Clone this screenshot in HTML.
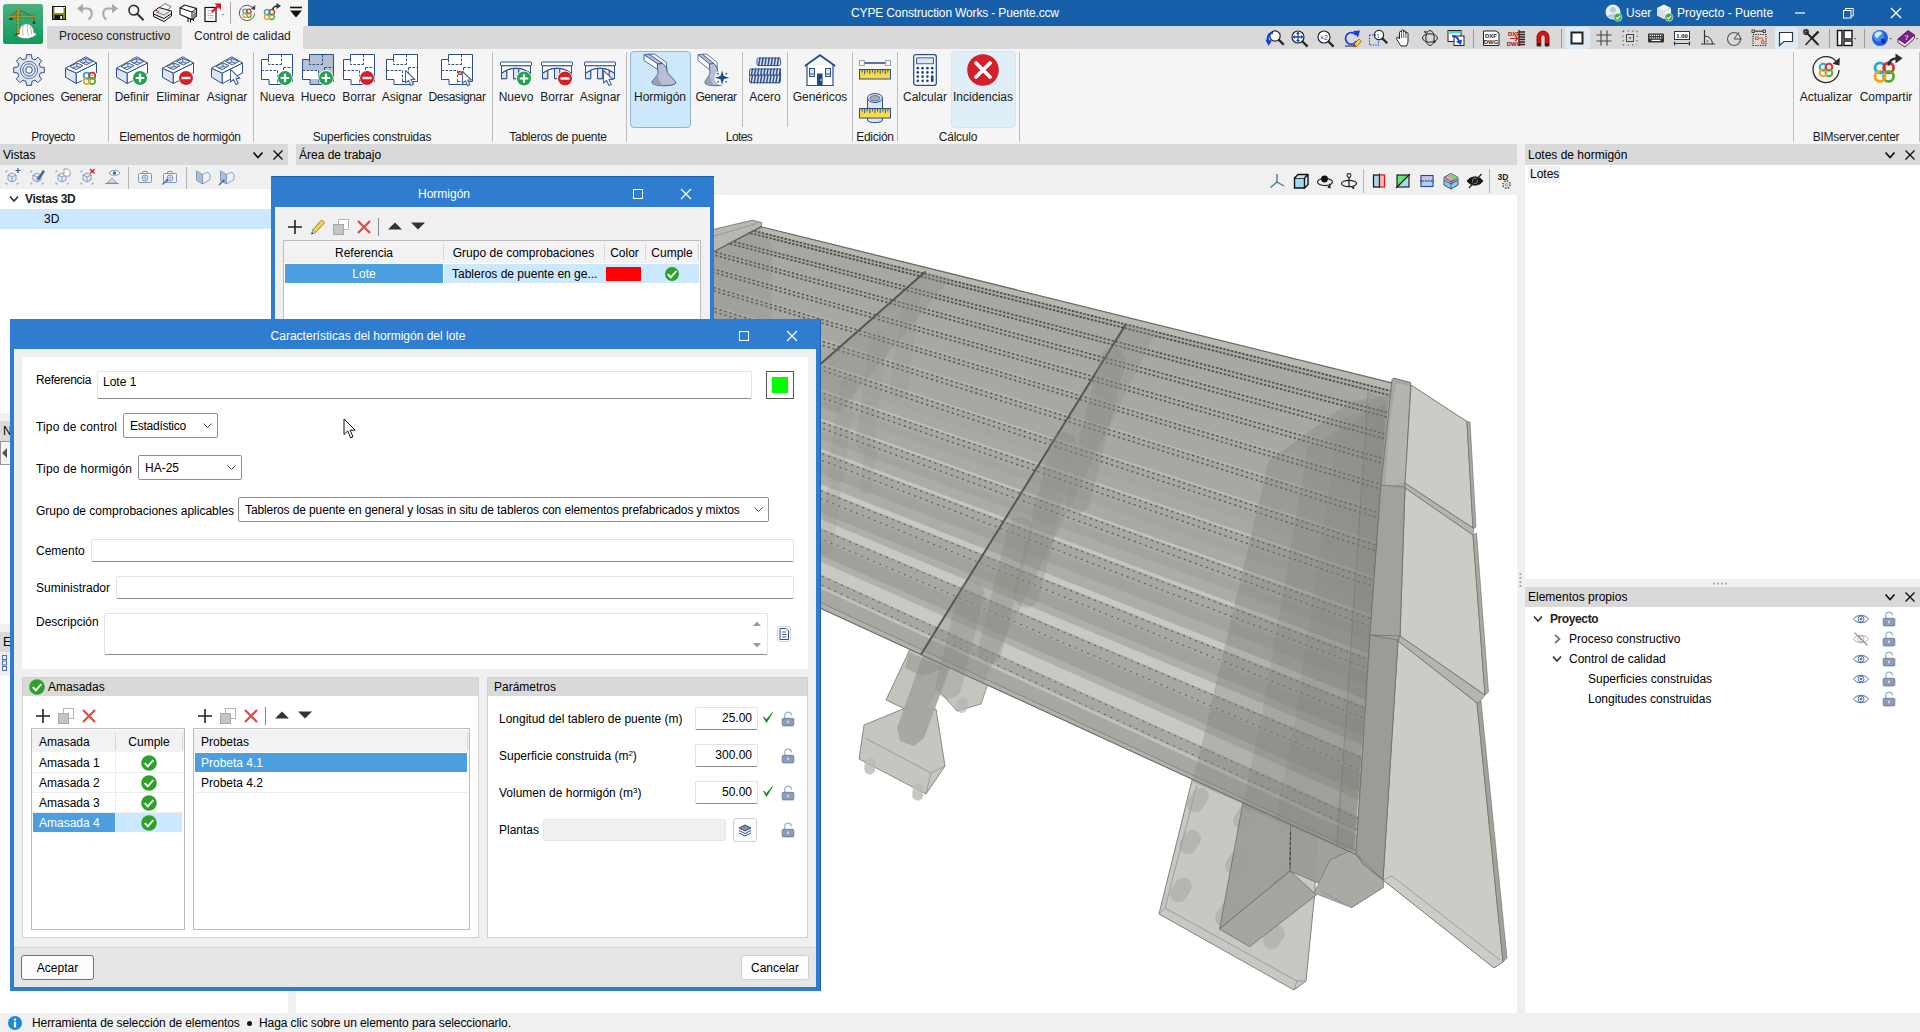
<!DOCTYPE html>
<html lang="es"><head><meta charset="utf-8"><title>CYPE Construction Works - Puente.ccw</title>
<style>
*{box-sizing:border-box;margin:0;padding:0}
html,body{width:1920px;height:1032px;overflow:hidden;background:#fff}
body{font-family:"Liberation Sans",sans-serif;font-size:12px;color:#000;position:relative;line-height:14px}
.a{position:absolute}
.t{position:absolute;white-space:nowrap;line-height:14px;height:14px}
.c{text-align:center}
.w{color:#fff}
.g9{background:#d9d9d9}
.f0{background:#f0f0f0}
.f5{background:#f5f5f5}
.inp{position:absolute;background:#fff;border:1px solid #e3e3e3;border-bottom:1px solid #8a8a8a;border-radius:2px}
.sel{position:absolute;background:#fff;border:1px solid #8e8e8e;border-radius:2px}
.sel .t{left:6px}
.chev{position:absolute;right:5px;top:9px;width:9px;height:6px}
.btn{position:absolute;background:#fdfdfd;border:1px solid #d0d0d0;border-radius:3px;text-align:center;line-height:24px}
.vsep{position:absolute;width:1px;background:#bdbdbd}
.rl{position:absolute;top:90px;height:14px;line-height:14px;white-space:nowrap;text-align:center;color:#1a1a1a}
.gl{position:absolute;top:130px;letter-spacing:-0.25px;height:14px;line-height:14px;white-space:nowrap;text-align:center;color:#1a1a1a}
svg{position:absolute;overflow:visible}
</style></head><body>
<!-- title bar -->
<div class="a f5" style="left:0;top:0;width:1920px;height:144px"></div>
<div class="a" style="left:308px;top:0;width:1612px;height:26px;background:#185faa"></div>
<div class="t w c" style="left:755px;top:6px;width:400px;letter-spacing:-0.15px">CYPE Construction Works - Puente.ccw</div>
<div class="t w" style="left:1626px;top:6px">User</div>
<div class="t w" style="left:1677px;top:6px">Proyecto - Puente</div>
<!-- tab row -->
<div class="a g9" style="left:47px;top:26px;width:1873px;height:23px"></div>
<div class="a f5" style="left:182px;top:26px;width:121px;height:23px"></div>
<div class="t" style="left:59px;top:29px;color:#222">Proceso constructivo</div>
<div class="t" style="left:194px;top:29px;color:#222">Control de calidad</div>
<!-- ribbon selected buttons -->
<div class="a" style="left:630px;top:51px;width:61px;height:77px;background:#cde8f8;border:1px solid #8fb6d2;border-radius:4px"></div>
<div class="a" style="left:951px;top:51px;width:65px;height:77px;background:#dfeef7;border:1px solid #d2e6f2;border-radius:4px"></div>
<!-- ribbon labels -->
<div class="rl" style="left:-11px;width:80px;top:90px">Opciones</div>
<div class="rl" style="left:41px;width:80px;letter-spacing:-0.4px">Generar</div>
<div class="rl" style="left:92px;width:80px">Definir</div>
<div class="rl" style="left:138px;width:80px">Eliminar</div>
<div class="rl" style="left:187px;width:80px">Asignar</div>
<div class="rl" style="left:237px;width:80px">Nueva</div>
<div class="rl" style="left:278px;width:80px">Hueco</div>
<div class="rl" style="left:319px;width:80px">Borrar</div>
<div class="rl" style="left:362px;width:80px">Asignar</div>
<div class="rl" style="left:417px;width:80px;letter-spacing:-0.35px">Desasignar</div>
<div class="rl" style="left:476px;width:80px">Nuevo</div>
<div class="rl" style="left:517px;width:80px">Borrar</div>
<div class="rl" style="left:560px;width:80px">Asignar</div>
<div class="rl" style="left:620px;width:80px">Hormigón</div>
<div class="rl" style="left:676px;width:80px;letter-spacing:-0.4px">Generar</div>
<div class="rl" style="left:725px;width:80px">Acero</div>
<div class="rl" style="left:780px;width:80px">Genéricos</div>
<div class="rl" style="left:885px;width:80px">Calcular</div>
<div class="rl" style="left:943px;width:80px">Incidencias</div>
<div class="rl" style="left:1786px;width:80px">Actualizar</div>
<div class="rl" style="left:1846px;width:80px">Compartir</div>
<!-- group labels -->
<div class="gl" style="left:3px;width:100px;letter-spacing:-0.5px">Proyecto</div>
<div class="gl" style="left:100px;width:160px">Elementos de hormigón</div>
<div class="gl" style="left:292px;width:160px">Superficies construidas</div>
<div class="gl" style="left:478px;width:160px">Tableros de puente</div>
<div class="gl" style="left:689px;width:100px;letter-spacing:-0.6px">Lotes</div>
<div class="gl" style="left:825px;width:100px">Edición</div>
<div class="gl" style="left:908px;width:100px">Cálculo</div>
<div class="gl" style="left:1796px;width:120px">BIMserver.center</div>
<!-- ribbon separators -->
<div class="vsep" style="left:108px;top:52px;height:90px"></div>
<div class="vsep" style="left:253px;top:52px;height:90px"></div>
<div class="vsep" style="left:492px;top:52px;height:90px"></div>
<div class="vsep" style="left:626px;top:52px;height:90px"></div>
<div class="vsep" style="left:742px;top:52px;height:75px"></div>
<div class="vsep" style="left:787px;top:52px;height:75px"></div>
<div class="vsep" style="left:852px;top:52px;height:90px"></div>
<div class="vsep" style="left:897px;top:52px;height:90px"></div>
<div class="vsep" style="left:1019px;top:52px;height:90px"></div>
<div class="vsep" style="left:1793px;top:52px;height:90px"></div>
<div class="vsep" style="left:1919px;top:52px;height:90px"></div>
<!-- panel headers row -->
<div class="a f0" style="left:0;top:144px;width:1920px;height:888px"></div>
<div class="a g9" style="left:0;top:144px;width:288px;height:21px"></div>
<div class="a g9" style="left:296px;top:144px;width:1221px;height:21px"></div>
<div class="a g9" style="left:1525px;top:144px;width:395px;height:21px"></div>
<div class="t" style="left:3px;top:148px">Vistas</div>
<div class="t" style="left:299px;top:148px">Área de trabajo</div>
<div class="t" style="left:1528px;top:148px">Lotes de hormigón</div>
<!-- left panel -->
<div class="a" style="left:0;top:189px;width:288px;height:824px;background:#fff"></div>
<div class="a" style="left:0;top:209px;width:288px;height:20px;background:#cce8ff"></div>
<div class="t" style="left:25px;top:192px;font-weight:bold;color:#222;letter-spacing:-0.4px">Vistas 3D</div>
<div class="t" style="left:44px;top:212px">3D</div>
<!-- left hidden-panel bits -->
<div class="a f0" style="left:0;top:413px;width:10px;height:8px"></div>
<div class="a g9" style="left:0;top:421px;width:10px;height:20px"></div>
<div class="t" style="left:3px;top:424px">N</div>
<div class="a" style="left:0;top:441px;width:12px;height:24px;background:#f5f5f5;border:1px solid #9a9a9a"></div>
<div class="a f0" style="left:0;top:624px;width:10px;height:8px"></div>
<div class="a g9" style="left:0;top:632px;width:10px;height:20px"></div>
<div class="t" style="left:3px;top:635px">E</div>
<div class="a f0" style="left:0;top:652px;width:10px;height:24px"></div>
<!-- work area -->
<div class="a" style="left:296px;top:195px;width:1221px;height:818px;background:#fff"></div>
<!-- right panels -->
<div class="a" style="left:1525px;top:165px;width:395px;height:414px;background:#fff"></div>
<div class="a f0" style="left:1528px;top:166px;width:32px;height:17px"></div>
<div class="t" style="left:1530px;top:167px">Lotes</div>
<div class="a g9" style="left:1525px;top:587px;width:395px;height:20px"></div>
<div class="t" style="left:1528px;top:590px">Elementos propios</div>
<div class="a" style="left:1525px;top:607px;width:395px;height:425px;background:#fff"></div>
<div class="t" style="left:1550px;top:612px;font-weight:bold;color:#222;letter-spacing:-0.4px">Proyecto</div>
<div class="t" style="left:1569px;top:632px">Proceso constructivo</div>
<div class="t" style="left:1569px;top:652px">Control de calidad</div>
<div class="t" style="left:1588px;top:672px">Superficies construidas</div>
<div class="t" style="left:1588px;top:692px">Longitudes construidas</div>
<!-- status bar -->
<div class="a f0" style="left:0;top:1013px;width:1920px;height:19px"></div>
<div class="t" style="left:32px;top:1016px;letter-spacing:-0.1px">Herramienta de selección de elementos</div>
<div class="a" style="left:247px;top:1021px;width:5px;height:5px;border-radius:3px;background:#111"></div>
<div class="t" style="left:259px;top:1016px;letter-spacing:-0.09px">Haga clic sobre un elemento para seleccionarlo.</div>
<!-- ribbon icons -->
<svg style="left:13px;top:54px" width="32" height="32" viewBox="0 0 32 32"><path d="M13.1 4.6L13.4 0.7L18.6 0.7L18.9 4.6L22.0 5.9L24.9 3.3L28.7 7.1L26.1 10.0L27.4 13.1L31.3 13.4L31.3 18.6L27.4 18.9L26.1 22.0L28.7 24.9L24.9 28.7L22.0 26.1L18.9 27.4L18.6 31.3L13.4 31.3L13.1 27.4L10.0 26.1L7.1 28.7L3.3 24.9L5.9 22.0L4.6 18.9L0.7 18.6L0.7 13.4L4.6 13.1L5.9 10.0L3.3 7.1L7.1 3.3L10.0 5.9Z" fill="#dfe4ef" stroke="#2b4f8c" stroke-width="1" stroke-linejoin="round"/><circle cx="16" cy="16" r="8.6" fill="#eef1f7" stroke="#2b4f8c" stroke-width="0.8"/><circle cx="16" cy="16" r="6.2" fill="#dfe4ef" stroke="#2b4f8c" stroke-width="0.9"/><circle cx="16" cy="16" r="3.3" fill="#fff" stroke="#2b4f8c" stroke-width="1"/></svg>
<svg style="left:65px;top:54px" width="32" height="32" viewBox="0 0 32 32"><polygon points="0.5,14.3 11.3,19 11.3,29.5 0.5,23.2" fill="#dfe4ef" stroke="#2b4f8c" stroke-width="1" stroke-linejoin="round"/><polygon points="11.3,19 31.5,9 31.5,19 11.3,29.5" fill="#fff" stroke="#2b4f8c" stroke-width="1" stroke-linejoin="round"/><polygon points="0.5,14.3 20.8,2.8 31.5,9 11.3,19" fill="#fff" stroke="#2b4f8c" stroke-width="1" stroke-linejoin="round"/><polygon points="4.9,12.5 11.9,8.9 18,11.6 11.2,15.7" fill="#dfe4ef" stroke="#2b4f8c" stroke-width="0.9" stroke-linejoin="round"/><polygon points="14.6,7.5 20.7,4.4 27.8,7.5 21.4,10.9" fill="#dfe4ef" stroke="#2b4f8c" stroke-width="0.9" stroke-linejoin="round"/><path d="M11.9 8.9V12.6L7.6 14.2M11.9 12.6L15.6 13.2M20.7 4.4V8L17.2 9.2M20.7 8L24.6 9.2" fill="none" stroke="#2b4f8c" stroke-width="0.8"/><circle cx="24" cy="24" r="8" fill="#f5f5f5" opacity="0.0"/><circle cx="21.73" cy="21.63" r="3.10" fill="none" stroke="#fff" stroke-width="3.54"/><circle cx="27.07" cy="21.63" r="3.10" fill="none" stroke="#fff" stroke-width="3.54"/><circle cx="27.07" cy="26.97" r="3.10" fill="none" stroke="#fff" stroke-width="3.54"/><circle cx="21.73" cy="26.97" r="3.10" fill="none" stroke="#fff" stroke-width="3.54"/><circle cx="21.73" cy="21.63" r="3.10" fill="none" stroke="#29a5dc" stroke-width="1.74"/><circle cx="27.07" cy="21.63" r="3.10" fill="none" stroke="#db2f2c" stroke-width="1.74"/><circle cx="27.07" cy="26.97" r="3.10" fill="none" stroke="#52ae32" stroke-width="1.74"/><circle cx="21.73" cy="26.97" r="3.10" fill="none" stroke="#f1a31f" stroke-width="1.74"/><path d="M21.73 24.73A3.10 3.10 0 0 0 24.21 23.49" fill="none" stroke="#29a5dc" stroke-width="1.74"/></svg>
<svg style="left:116px;top:54px" width="32" height="32" viewBox="0 0 32 32"><polygon points="0.5,14.3 11.3,19 11.3,29.5 0.5,23.2" fill="#dfe4ef" stroke="#2b4f8c" stroke-width="1" stroke-linejoin="round"/><polygon points="11.3,19 31.5,9 31.5,19 11.3,29.5" fill="#fff" stroke="#2b4f8c" stroke-width="1" stroke-linejoin="round"/><polygon points="0.5,14.3 20.8,2.8 31.5,9 11.3,19" fill="#fff" stroke="#2b4f8c" stroke-width="1" stroke-linejoin="round"/><polygon points="4.9,12.5 11.9,8.9 18,11.6 11.2,15.7" fill="#dfe4ef" stroke="#2b4f8c" stroke-width="0.9" stroke-linejoin="round"/><polygon points="14.6,7.5 20.7,4.4 27.8,7.5 21.4,10.9" fill="#dfe4ef" stroke="#2b4f8c" stroke-width="0.9" stroke-linejoin="round"/><path d="M11.9 8.9V12.6L7.6 14.2M11.9 12.6L15.6 13.2M20.7 4.4V8L17.2 9.2M20.7 8L24.6 9.2" fill="none" stroke="#2b4f8c" stroke-width="0.8"/><circle cx="24" cy="24" r="7.8" fill="#fff"/><circle cx="24" cy="24" r="7" fill="#22a150"/><path d="M19.7 24H28.3M24 19.7V28.3" stroke="#fff" stroke-width="2.2"/></svg>
<svg style="left:162px;top:54px" width="32" height="32" viewBox="0 0 32 32"><polygon points="0.5,14.3 11.3,19 11.3,29.5 0.5,23.2" fill="#dfe4ef" stroke="#2b4f8c" stroke-width="1" stroke-linejoin="round"/><polygon points="11.3,19 31.5,9 31.5,19 11.3,29.5" fill="#fff" stroke="#2b4f8c" stroke-width="1" stroke-linejoin="round"/><polygon points="0.5,14.3 20.8,2.8 31.5,9 11.3,19" fill="#fff" stroke="#2b4f8c" stroke-width="1" stroke-linejoin="round"/><polygon points="4.9,12.5 11.9,8.9 18,11.6 11.2,15.7" fill="#dfe4ef" stroke="#2b4f8c" stroke-width="0.9" stroke-linejoin="round"/><polygon points="14.6,7.5 20.7,4.4 27.8,7.5 21.4,10.9" fill="#dfe4ef" stroke="#2b4f8c" stroke-width="0.9" stroke-linejoin="round"/><path d="M11.9 8.9V12.6L7.6 14.2M11.9 12.6L15.6 13.2M20.7 4.4V8L17.2 9.2M20.7 8L24.6 9.2" fill="none" stroke="#2b4f8c" stroke-width="0.8"/><circle cx="24" cy="24" r="7.8" fill="#fff"/><circle cx="24" cy="24" r="7" fill="#d5202c"/><path d="M19.5 24H28.5" stroke="#fff" stroke-width="2.4"/></svg>
<svg style="left:211px;top:54px" width="32" height="32" viewBox="0 0 32 32"><polygon points="0.5,14.3 11.3,19 11.3,29.5 0.5,23.2" fill="#dfe4ef" stroke="#2b4f8c" stroke-width="1" stroke-linejoin="round"/><polygon points="11.3,19 31.5,9 31.5,19 11.3,29.5" fill="#fff" stroke="#2b4f8c" stroke-width="1" stroke-linejoin="round"/><polygon points="0.5,14.3 20.8,2.8 31.5,9 11.3,19" fill="#fff" stroke="#2b4f8c" stroke-width="1" stroke-linejoin="round"/><polygon points="4.9,12.5 11.9,8.9 18,11.6 11.2,15.7" fill="#dfe4ef" stroke="#2b4f8c" stroke-width="0.9" stroke-linejoin="round"/><polygon points="14.6,7.5 20.7,4.4 27.8,7.5 21.4,10.9" fill="#dfe4ef" stroke="#2b4f8c" stroke-width="0.9" stroke-linejoin="round"/><path d="M11.9 8.9V12.6L7.6 14.2M11.9 12.6L15.6 13.2M20.7 4.4V8L17.2 9.2M20.7 8L24.6 9.2" fill="none" stroke="#2b4f8c" stroke-width="0.8"/><path d="M19.5 15.5L19.5 28.0L22.5 25.3L24.9 30.5L27.3 29.4L24.9 24.4L28.9 24.4Z" fill="#fff" stroke="#4a68a0" stroke-width="1.1" stroke-linejoin="round"/></svg>
<svg style="left:261px;top:54px" width="32" height="32" viewBox="0 0 32 32"><polygon points="7.5,0.5 31.5,0.5 31.5,27.5 27,27.5 27,30.5 8,30.5 8,25.5 0.5,25.5 0.5,5.5 7.5,5.5" fill="#fff" stroke="#2b4f8c" stroke-width="1"/><path d="M20.5 0.5V10.5M7.5 5.5V10.5H20.5M0.5 16.5H16.5V25.5M22.5 13.5H31.5M22.5 13.5V20M16.5 25.5V30.5M16.5 27.5H22" fill="none" stroke="#2b4f8c" stroke-width="1" stroke-dasharray="2.6 1.4"/><circle cx="24" cy="24" r="7.8" fill="#fff"/><circle cx="24" cy="24" r="7" fill="#22a150"/><path d="M19.7 24H28.3M24 19.7V28.3" stroke="#fff" stroke-width="2.2"/></svg>
<svg style="left:302px;top:54px" width="32" height="32" viewBox="0 0 32 32"><polygon points="7.5,0.5 31.5,0.5 31.5,27.5 27,27.5 27,30.5 8,30.5 8,25.5 0.5,25.5 0.5,5.5 7.5,5.5" fill="#b7bfd3" stroke="#2b4f8c" stroke-width="1"/><rect x="1" y="16.5" width="15" height="8.5" fill="#fff"/><path d="M20.5 0.5V10.5M7.5 5.5V10.5H20.5M0.5 16.5H16.5V25.5M22.5 13.5H31.5M22.5 13.5V20M16.5 25.5V30.5M16.5 27.5H22" fill="none" stroke="#2b4f8c" stroke-width="1" stroke-dasharray="2.6 1.4"/><circle cx="24" cy="24" r="7.8" fill="#fff"/><circle cx="24" cy="24" r="7" fill="#22a150"/><path d="M19.7 24H28.3M24 19.7V28.3" stroke="#fff" stroke-width="2.2"/></svg>
<svg style="left:343px;top:54px" width="32" height="32" viewBox="0 0 32 32"><polygon points="7.5,0.5 31.5,0.5 31.5,27.5 27,27.5 27,30.5 8,30.5 8,25.5 0.5,25.5 0.5,5.5 7.5,5.5" fill="#fff" stroke="#2b4f8c" stroke-width="1"/><path d="M20.5 0.5V10.5M7.5 5.5V10.5H20.5M0.5 16.5H16.5V25.5M22.5 13.5H31.5M22.5 13.5V20M16.5 25.5V30.5M16.5 27.5H22" fill="none" stroke="#2b4f8c" stroke-width="1" stroke-dasharray="2.6 1.4"/><circle cx="24" cy="24" r="7.8" fill="#fff"/><circle cx="24" cy="24" r="7" fill="#d5202c"/><path d="M19.5 24H28.5" stroke="#fff" stroke-width="2.4"/></svg>
<svg style="left:386px;top:54px" width="32" height="32" viewBox="0 0 32 32"><polygon points="7.5,0.5 31.5,0.5 31.5,27.5 27,27.5 27,30.5 8,30.5 8,25.5 0.5,25.5 0.5,5.5 7.5,5.5" fill="#fff" stroke="#2b4f8c" stroke-width="1"/><path d="M20.5 0.5V10.5M7.5 5.5V10.5H20.5M0.5 16.5H16.5V25.5M22.5 13.5H31.5M22.5 13.5V20M16.5 25.5V30.5M16.5 27.5H22" fill="none" stroke="#2b4f8c" stroke-width="1" stroke-dasharray="2.6 1.4"/><path d="M19.5 16.5L19.5 29.0L22.5 26.3L24.9 31.5L27.3 30.4L24.9 25.4L28.9 25.4Z" fill="#fff" stroke="#4a68a0" stroke-width="1.1" stroke-linejoin="round"/></svg>
<svg style="left:441px;top:54px" width="32" height="32" viewBox="0 0 32 32"><polygon points="7.5,0.5 31.5,0.5 31.5,27.5 27,27.5 27,30.5 8,30.5 8,25.5 0.5,25.5 0.5,5.5 7.5,5.5" fill="#fff" stroke="#2b4f8c" stroke-width="1"/><path d="M20.5 0.5V10.5M7.5 5.5V10.5H20.5M0.5 16.5H16.5V25.5M22.5 13.5H31.5M22.5 13.5V20M16.5 25.5V30.5M16.5 27.5H22" fill="none" stroke="#2b4f8c" stroke-width="1" stroke-dasharray="2.6 1.4"/><circle cx="19" cy="19" r="2.2" fill="#d5202c"/><path d="M17.7 19H20.3" stroke="#fff" stroke-width="0.9"/><path d="M21.5 17.5L21.5 29.4L24.4 26.8L26.6 31.8L28.9 30.7L26.6 26.0L30.4 26.0Z" fill="#fff" stroke="#4a68a0" stroke-width="1.1" stroke-linejoin="round"/></svg>
<svg style="left:500px;top:54px" width="32" height="32" viewBox="0 0 32 32"><path d="M1.5 11.7V24.7H6.7V16.2Q10 14.6 13.5 14.2V24.7H18.7V14.2Q22 14.6 25.3 16.2V24.7H30.5V11.7Z" fill="#fff" stroke="#2b4f8c" stroke-width="1" stroke-linejoin="round"/><path d="M1.5 19.3Q4 17.3 6.7 16.2V24.7H1.5Z" fill="#dfe4ef" stroke="#2b4f8c" stroke-width="1" stroke-linejoin="round"/><path d="M13.5 14.5H18.7V24.7H13.5Z" fill="#dfe4ef" stroke="#2b4f8c" stroke-width="1" stroke-linejoin="round"/><path d="M30.5 19.3Q28 17.3 25.3 16.2V24.7H30.5Z" fill="#dfe4ef" stroke="#2b4f8c" stroke-width="1" stroke-linejoin="round"/><path d="M1.5 19.3Q16 8.7 30.5 19.3" fill="none" stroke="#2b4f8c" stroke-width="0.9"/><rect x="0.5" y="8" width="31" height="3.7" rx="0.6" fill="#fff" stroke="#2b4f8c" stroke-width="1"/><circle cx="24" cy="24.5" r="7.8" fill="#fff"/><circle cx="24" cy="24.5" r="7" fill="#22a150"/><path d="M19.7 24.5H28.3M24 20.2V28.8" stroke="#fff" stroke-width="2.2"/></svg>
<svg style="left:541px;top:54px" width="32" height="32" viewBox="0 0 32 32"><path d="M1.5 11.7V24.7H6.7V16.2Q10 14.6 13.5 14.2V24.7H18.7V14.2Q22 14.6 25.3 16.2V24.7H30.5V11.7Z" fill="#fff" stroke="#2b4f8c" stroke-width="1" stroke-linejoin="round"/><path d="M1.5 19.3Q4 17.3 6.7 16.2V24.7H1.5Z" fill="#dfe4ef" stroke="#2b4f8c" stroke-width="1" stroke-linejoin="round"/><path d="M13.5 14.5H18.7V24.7H13.5Z" fill="#dfe4ef" stroke="#2b4f8c" stroke-width="1" stroke-linejoin="round"/><path d="M30.5 19.3Q28 17.3 25.3 16.2V24.7H30.5Z" fill="#dfe4ef" stroke="#2b4f8c" stroke-width="1" stroke-linejoin="round"/><path d="M1.5 19.3Q16 8.7 30.5 19.3" fill="none" stroke="#2b4f8c" stroke-width="0.9"/><rect x="0.5" y="8" width="31" height="3.7" rx="0.6" fill="#fff" stroke="#2b4f8c" stroke-width="1"/><circle cx="24" cy="24.5" r="7.8" fill="#fff"/><circle cx="24" cy="24.5" r="7" fill="#d5202c"/><path d="M19.5 24.5H28.5" stroke="#fff" stroke-width="2.4"/></svg>
<svg style="left:584px;top:54px" width="32" height="32" viewBox="0 0 32 32"><path d="M1.5 11.7V24.7H6.7V16.2Q10 14.6 13.5 14.2V24.7H18.7V14.2Q22 14.6 25.3 16.2V24.7H30.5V11.7Z" fill="#fff" stroke="#2b4f8c" stroke-width="1" stroke-linejoin="round"/><path d="M1.5 19.3Q4 17.3 6.7 16.2V24.7H1.5Z" fill="#dfe4ef" stroke="#2b4f8c" stroke-width="1" stroke-linejoin="round"/><path d="M13.5 14.5H18.7V24.7H13.5Z" fill="#dfe4ef" stroke="#2b4f8c" stroke-width="1" stroke-linejoin="round"/><path d="M30.5 19.3Q28 17.3 25.3 16.2V24.7H30.5Z" fill="#dfe4ef" stroke="#2b4f8c" stroke-width="1" stroke-linejoin="round"/><path d="M1.5 19.3Q16 8.7 30.5 19.3" fill="none" stroke="#2b4f8c" stroke-width="0.9"/><rect x="0.5" y="8" width="31" height="3.7" rx="0.6" fill="#fff" stroke="#2b4f8c" stroke-width="1"/><path d="M19.5 16.5L19.5 29.0L22.5 26.3L24.9 31.5L27.3 30.4L24.9 25.4L28.9 25.4Z" fill="#fff" stroke="#4a68a0" stroke-width="1.1" stroke-linejoin="round"/></svg>
<svg style="left:644px;top:54px" width="32" height="32" viewBox="0 0 32 32"><path d="M13.4 10L13.4 15C15 19 13.5 21 11 24C9 26 7.4 28 8.2 29.2C11 32.6 29 32.6 31.8 29.2C32.5 28 28 24 23.4 18.5L22.6 13.8L18.8 9.4Z" fill="#b9bfd0" stroke="#2b4f8c" stroke-width="0.9" stroke-linejoin="round"/><path d="M14.2 19.5C12.5 23 8.2 27 8.6 29C10 31 16 31.6 20 31.6C16 29 13.4 25 14.2 19.5Z" fill="#97a1bc"/><path d="M0 0.8L5.2 0.2L18.8 9.4L13.4 9.8Z" fill="#b9bfd0" stroke="#2b4f8c" stroke-width="0.8" stroke-linejoin="round"/><path d="M0 0.8L0 6.6L13.4 15.3L13.4 9.8Z" fill="#fff" stroke="#2b4f8c" stroke-width="0.8" stroke-linejoin="round"/><path d="M5.2 0.2L10.4 0.2L22.6 8.5L22.6 13.8L18.8 9.4Z" fill="#fff" stroke="#2b4f8c" stroke-width="0.8" stroke-linejoin="round"/></svg>
<svg style="left:698px;top:54px" width="32" height="32" viewBox="0 0 32 32"><g transform="scale(0.85,1)"><path d="M13.4 10L13.4 15C15 19 13.5 21 11 24C9 26 7.4 28 8.2 29.2C11 32.6 29 32.6 31.8 29.2C32.5 28 28 24 23.4 18.5L22.6 13.8L18.8 9.4Z" fill="#b9bfd0" stroke="#2b4f8c" stroke-width="0.9" stroke-linejoin="round"/><path d="M14.2 19.5C12.5 23 8.2 27 8.6 29C10 31 16 31.6 20 31.6C16 29 13.4 25 14.2 19.5Z" fill="#97a1bc"/><path d="M0 0.8L5.2 0.2L18.8 9.4L13.4 9.8Z" fill="#b9bfd0" stroke="#2b4f8c" stroke-width="0.8" stroke-linejoin="round"/><path d="M0 0.8L0 6.6L13.4 15.3L13.4 9.8Z" fill="#fff" stroke="#2b4f8c" stroke-width="0.8" stroke-linejoin="round"/><path d="M5.2 0.2L10.4 0.2L22.6 8.5L22.6 13.8L18.8 9.4Z" fill="#fff" stroke="#2b4f8c" stroke-width="0.8" stroke-linejoin="round"/></g><circle cx="24.1" cy="23.7" r="7.6" fill="#f5f5f5"/><path d="M24.1 16.6L25.7 22.1L31.2 23.7L25.7 25.3L24.1 30.8L22.5 25.3L17 23.7L22.5 22.1Z" fill="#1f4a86"/><path d="M19.4 19l1.3 1.3M28.8 19l-1.3 1.3M19.4 28.4l1.3-1.3M28.8 28.4l-1.3-1.3" stroke="#1f4a86" stroke-width="1.2"/></svg>
<svg style="left:749px;top:57px" width="32" height="27" viewBox="0 0 32 27"><rect x="8" y="1" width="23.5" height="7.5" rx="1.5" fill="#dfe4ef" stroke="#2b4f8c" stroke-width="0.9"/><path d="M11.1 0.4L9.5 9.1" stroke="#2b4f8c" stroke-width="1.5"/><path d="M14.2 0.4L12.6 9.1" stroke="#2b4f8c" stroke-width="1.5"/><path d="M17.3 0.4L15.7 9.1" stroke="#2b4f8c" stroke-width="1.5"/><path d="M20.4 0.4L18.8 9.1" stroke="#2b4f8c" stroke-width="1.5"/><path d="M23.5 0.4L21.9 9.1" stroke="#2b4f8c" stroke-width="1.5"/><path d="M26.6 0.4L25.0 9.1" stroke="#2b4f8c" stroke-width="1.5"/><path d="M29.7 0.4L28.1 9.1" stroke="#2b4f8c" stroke-width="1.5"/><rect x="0.5" y="12" width="31" height="7.5" rx="1.5" fill="#dfe4ef" stroke="#2b4f8c" stroke-width="0.9"/><path d="M3.6 11.4L2.0 20.1" stroke="#2b4f8c" stroke-width="1.5"/><path d="M6.7 11.4L5.1 20.1" stroke="#2b4f8c" stroke-width="1.5"/><path d="M9.8 11.4L8.2 20.1" stroke="#2b4f8c" stroke-width="1.5"/><path d="M12.9 11.4L11.3 20.1" stroke="#2b4f8c" stroke-width="1.5"/><path d="M16.0 11.4L14.4 20.1" stroke="#2b4f8c" stroke-width="1.5"/><path d="M19.1 11.4L17.5 20.1" stroke="#2b4f8c" stroke-width="1.5"/><path d="M22.2 11.4L20.6 20.1" stroke="#2b4f8c" stroke-width="1.5"/><path d="M25.3 11.4L23.7 20.1" stroke="#2b4f8c" stroke-width="1.5"/><path d="M28.4 11.4L26.8 20.1" stroke="#2b4f8c" stroke-width="1.5"/><path d="M31.5 11.4L29.9 20.1" stroke="#2b4f8c" stroke-width="1.5"/><rect x="0.5" y="18.2" width="31" height="7.5" rx="1.5" fill="#dfe4ef" stroke="#2b4f8c" stroke-width="0.9"/><path d="M3.6 17.599999999999998L2.0 26.3" stroke="#2b4f8c" stroke-width="1.5"/><path d="M6.7 17.599999999999998L5.1 26.3" stroke="#2b4f8c" stroke-width="1.5"/><path d="M9.8 17.599999999999998L8.2 26.3" stroke="#2b4f8c" stroke-width="1.5"/><path d="M12.9 17.599999999999998L11.3 26.3" stroke="#2b4f8c" stroke-width="1.5"/><path d="M16.0 17.599999999999998L14.4 26.3" stroke="#2b4f8c" stroke-width="1.5"/><path d="M19.1 17.599999999999998L17.5 26.3" stroke="#2b4f8c" stroke-width="1.5"/><path d="M22.2 17.599999999999998L20.6 26.3" stroke="#2b4f8c" stroke-width="1.5"/><path d="M25.3 17.599999999999998L23.7 26.3" stroke="#2b4f8c" stroke-width="1.5"/><path d="M28.4 17.599999999999998L26.8 26.3" stroke="#2b4f8c" stroke-width="1.5"/><path d="M31.5 17.599999999999998L29.9 26.3" stroke="#2b4f8c" stroke-width="1.5"/></svg>
<svg style="left:804px;top:54px" width="32" height="32" viewBox="0 0 32 32"><path d="M3 11V31.5H29V11" fill="#fff" stroke="#2b4f8c" stroke-width="1.2"/><path d="M0.8 12L16 1.2L31.2 12" fill="none" stroke="#2b4f8c" stroke-width="1.8" stroke-linejoin="miter"/><rect x="5.5" y="14.5" width="5" height="8" fill="#dfe4ef" stroke="#2b4f8c" stroke-width="1"/><path d="M5.5 20H10.5" stroke="#2b4f8c" stroke-width="0.9"/><rect x="21.5" y="14.5" width="5" height="8" fill="#dfe4ef" stroke="#2b4f8c" stroke-width="1"/><path d="M21.5 20H26.5" stroke="#2b4f8c" stroke-width="0.9"/><rect x="13" y="19.5" width="5.6" height="12" fill="#1f4a86"/><rect x="16.6" y="25" width="0.9" height="2" fill="#fff"/></svg>
<svg style="left:859px;top:60px" width="32" height="20" viewBox="0 0 32 20"><path d="M3 3H29" stroke="#1f4a86" stroke-width="1.5"/><rect x="0.5" y="0.6" width="4.8" height="4.8" fill="#fff" stroke="#8a93b3" stroke-width="0.9"/><rect x="26.7" y="0.6" width="4.8" height="4.8" fill="#fff" stroke="#8a93b3" stroke-width="0.9"/><rect x="0.5" y="9.5" width="31" height="9.5" fill="#f7d94a" stroke="#2b4f8c" stroke-width="1"/><path d="M3.1 9.5V12.5" stroke="#2b4f8c" stroke-width="1"/><path d="M5.7 9.5V14.1" stroke="#2b4f8c" stroke-width="1"/><path d="M8.2 9.5V12.5" stroke="#2b4f8c" stroke-width="1"/><path d="M10.8 9.5V14.1" stroke="#2b4f8c" stroke-width="1"/><path d="M13.4 9.5V12.5" stroke="#2b4f8c" stroke-width="1"/><path d="M16.0 9.5V14.1" stroke="#2b4f8c" stroke-width="1"/><path d="M18.6 9.5V12.5" stroke="#2b4f8c" stroke-width="1"/><path d="M21.2 9.5V14.1" stroke="#2b4f8c" stroke-width="1"/><path d="M23.8 9.5V12.5" stroke="#2b4f8c" stroke-width="1"/><path d="M26.3 9.5V14.1" stroke="#2b4f8c" stroke-width="1"/><path d="M28.9 9.5V12.5" stroke="#2b4f8c" stroke-width="1"/></svg>
<svg style="left:859px;top:93px" width="32" height="32" viewBox="0 0 32 32"><path d="M8.5 5V27C8.5 30.5 23.5 30.5 23.5 27V5" fill="#dfe4ef" stroke="#2b4f8c" stroke-width="1"/><ellipse cx="16" cy="5" rx="7.5" ry="4.5" fill="#e8ebf3" stroke="#2b4f8c" stroke-width="1"/><ellipse cx="16" cy="5.3" rx="5" ry="2.7" fill="#a7adbf" stroke="#2b4f8c" stroke-width="0.7"/><rect x="0.5" y="15.5" width="31" height="9.5" fill="#f7d94a" stroke="#2b4f8c" stroke-width="1"/><path d="M3.1 15.5V18.5" stroke="#2b4f8c" stroke-width="1"/><path d="M5.7 15.5V20.1" stroke="#2b4f8c" stroke-width="1"/><path d="M8.2 15.5V18.5" stroke="#2b4f8c" stroke-width="1"/><path d="M10.8 15.5V20.1" stroke="#2b4f8c" stroke-width="1"/><path d="M13.4 15.5V18.5" stroke="#2b4f8c" stroke-width="1"/><path d="M16.0 15.5V20.1" stroke="#2b4f8c" stroke-width="1"/><path d="M18.6 15.5V18.5" stroke="#2b4f8c" stroke-width="1"/><path d="M21.2 15.5V20.1" stroke="#2b4f8c" stroke-width="1"/><path d="M23.8 15.5V18.5" stroke="#2b4f8c" stroke-width="1"/><path d="M26.3 15.5V20.1" stroke="#2b4f8c" stroke-width="1"/><path d="M28.9 15.5V18.5" stroke="#2b4f8c" stroke-width="1"/></svg>
<svg style="left:913px;top:54px" width="24" height="32" viewBox="0 0 24 32"><rect x="0.7" y="0.7" width="22.6" height="30.6" rx="2.2" fill="#fff" stroke="#2b4f8c" stroke-width="1.3"/><rect x="3.6" y="3.8" width="16.8" height="6" fill="#dfe4ef" stroke="#2b4f8c" stroke-width="0.9"/><circle cx="4.8" cy="14.2" r="1.35" fill="#1f4a86"/><circle cx="9.6" cy="14.2" r="1.35" fill="#1f4a86"/><circle cx="14.4" cy="14.2" r="1.35" fill="#1f4a86"/><circle cx="19.2" cy="14.2" r="1.35" fill="#1f4a86"/><circle cx="4.8" cy="18.4" r="1.35" fill="#1f4a86"/><circle cx="9.6" cy="18.4" r="1.35" fill="#1f4a86"/><circle cx="14.4" cy="18.4" r="1.35" fill="#1f4a86"/><circle cx="19.2" cy="18.4" r="1.35" fill="#1f4a86"/><circle cx="4.8" cy="22.6" r="1.35" fill="#1f4a86"/><circle cx="9.6" cy="22.6" r="1.35" fill="#1f4a86"/><circle cx="14.4" cy="22.6" r="1.35" fill="#1f4a86"/><circle cx="4.8" cy="26.8" r="1.35" fill="#1f4a86"/><circle cx="9.6" cy="26.8" r="1.35" fill="#1f4a86"/><circle cx="14.4" cy="26.8" r="1.35" fill="#1f4a86"/><rect x="17.9" y="21.3" width="2.7" height="6.8" rx="1.2" fill="#1f4a86"/></svg>
<svg style="left:967px;top:54px" width="32" height="32" viewBox="0 0 32 32"><circle cx="16" cy="16" r="15.8" fill="#d5202c"/><path d="M9 9L23 23M23 9L9 23" stroke="#fff" stroke-width="3.8" stroke-linecap="round"/></svg>
<svg style="left:1810px;top:54px" width="32" height="32" viewBox="0 0 32 32"><path d="M27.5 9.5A13 13 0 1 0 29 16" fill="none" stroke="#2a2a2a" stroke-width="1.3"/><path d="M22.5 9.8L29.8 3.5L29.5 11.5Z" fill="#2a2a2a"/><circle cx="13.08" cy="13.08" r="3.40" fill="none" stroke="#29a5dc" stroke-width="1.90"/><circle cx="18.92" cy="13.08" r="3.40" fill="none" stroke="#db2f2c" stroke-width="1.90"/><circle cx="18.92" cy="18.92" r="3.40" fill="none" stroke="#52ae32" stroke-width="1.90"/><circle cx="13.08" cy="18.92" r="3.40" fill="none" stroke="#f1a31f" stroke-width="1.90"/><path d="M13.08 16.48A3.40 3.40 0 0 0 15.80 15.12" fill="none" stroke="#29a5dc" stroke-width="1.90"/></svg>
<svg style="left:1869px;top:53px" width="34" height="34" viewBox="0 0 34 34"><circle cx="11.00" cy="14.80" r="5.00" fill="none" stroke="#29a5dc" stroke-width="2.80"/><circle cx="19.60" cy="14.80" r="5.00" fill="none" stroke="#db2f2c" stroke-width="2.80"/><circle cx="19.60" cy="23.40" r="5.00" fill="none" stroke="#52ae32" stroke-width="2.80"/><circle cx="11.00" cy="23.40" r="5.00" fill="none" stroke="#f1a31f" stroke-width="2.80"/><path d="M11.00 19.80A5.00 5.00 0 0 0 15.00 17.80" fill="none" stroke="#29a5dc" stroke-width="2.80"/><path d="M19.5 12.5C20 7.5 24 5.5 27.5 5.5" fill="none" stroke="#2a2a2a" stroke-width="2.6"/><path d="M26.5 0.5L33.5 5.3L26.5 10.5Z" fill="#2a2a2a"/></svg>
<!-- top small toolbar -->
<div class="a" style="left:1565px;top:27px;width:25px;height:22px;background:#dcebf6;border-radius:3px"></div>
<div class="a" style="left:1775px;top:27px;width:23px;height:22px;background:#dcebf6;border-radius:3px"></div>
<svg style="left:1263px;top:27px" width="22" height="22" viewBox="-11.0 -11.0 22 22"><circle cx="1" cy="-2" r="5.2" fill="#fff" stroke="#222" stroke-width="1.2"/><path d="M4.6 1.6L9.8 6.8" stroke="#222" stroke-width="2.2"/><path d="M-1 -5C-6 -5 -7 0 -5.5 3" fill="none" stroke="#1440e0" stroke-width="2.2"/><path d="M-8.6 1.5L-2 2.5L-5.5 8Z" fill="#1440e0"/></svg>
<svg style="left:1288px;top:27px" width="22" height="22" viewBox="-11.0 -11.0 22 22"><circle cx="-1" cy="-1" r="6" fill="#fff" stroke="#222" stroke-width="1.2"/><path d="M3.2 3.2L8.6 8.6" stroke="#222" stroke-width="2.2"/><path d="M-1 -5.5V3.5M-5.5 -1H3.5" stroke="#1440e0" stroke-width="1.3"/><path d="M-1 -6.5l-2 2.5h4zM-1 4.5l-2 -2.5h4zM-6.5 -1l2.5 -2v4zM4.5 -1l-2.5 -2v4z" fill="#1440e0"/></svg>
<svg style="left:1314px;top:27px" width="22" height="22" viewBox="-11.0 -11.0 22 22"><circle cx="-1" cy="-1" r="6" fill="#fff" stroke="#222" stroke-width="1.2"/><path d="M3.2 3.2L8.6 8.6" stroke="#222" stroke-width="2.2"/><text x="-1" y="1.6" font-size="7" font-family="Liberation Sans,sans-serif" text-anchor="middle" fill="#1440e0">×2</text></svg>
<svg style="left:1341px;top:27px" width="22" height="22" viewBox="-11.0 -11.0 22 22"><path d="M4 -3A5.8 5.8 0 1 0 4.5 3" fill="none" stroke="#1440e0" stroke-width="1.7"/><path d="M1 -7L8 -7.5L6 -0.5Z" fill="#1440e0"/><path d="M-7 8H2" stroke="#222" stroke-width="1"/><path d="M2 6L7 1L9.5 3.5L4.5 8.5Z" fill="#f2d437" stroke="#6b5a10" stroke-width="0.7"/><path d="M2 6L4.5 8.5L1 9.2Z" fill="#b22"/></svg>
<svg style="left:1367px;top:27px" width="22" height="22" viewBox="-11.0 -11.0 22 22"><circle cx="1" cy="-3" r="4.6" fill="#fff" stroke="#222" stroke-width="1.2"/><path d="M4.2 0.2L9.2 5.2" stroke="#222" stroke-width="2.2"/><rect x="-8.5" y="-3" width="9" height="10" fill="none" stroke="#1440e0" stroke-width="1.1" stroke-dasharray="1.3 1.3"/></svg>
<svg style="left:1393px;top:27px" width="22" height="22" viewBox="-11.0 -11.0 22 22"><path d="M-3 8C-5 5 -7 2 -7.5 0C-7 -1.5 -5.5 -1 -4.5 1V-5.5C-4.5 -7 -2.5 -7 -2.5 -5.5V-7C-2.5 -8.6 -0.3 -8.6 -0.3 -7V-6C-0.3 -7.6 1.9 -7.6 1.9 -6V-4.5C1.9 -6 4 -6 4 -4.5V3C4 5 3 6.5 2.5 8Z" fill="#fff" stroke="#222" stroke-width="1"/><path d="M-2.5 -5V0M-0.3 -6V0M1.9 -5V0" stroke="#222" stroke-width="0.7"/></svg>
<svg style="left:1419px;top:27px" width="22" height="22" viewBox="-11.0 -11.0 22 22"><ellipse cx="0" cy="0" rx="7.5" ry="4.2" fill="none" stroke="#222" stroke-width="1"/><ellipse cx="0" cy="0" rx="4.2" ry="7.5" fill="none" stroke="#222" stroke-width="1"/><path d="M3 3l3 -0.5l-1 3zM-6 -7l3 .5l-2 2z" fill="#222"/></svg>
<svg style="left:1445px;top:27px" width="22" height="22" viewBox="-11.0 -11.0 22 22"><rect x="-8" y="-7.5" width="13" height="11" fill="#fff" stroke="#222" stroke-width="1"/><rect x="-7.5" y="-7" width="12" height="2.6" fill="#3cd9e6"/><rect x="-2" y="-2" width="10" height="9.5" fill="#fff" stroke="#222" stroke-width="1"/><path d="M-4 -2C0 -2 2 0 3 3" fill="none" stroke="#1440e0" stroke-width="1.8"/><path d="M0 3.5L6 1.5L5 7Z" fill="#1440e0"/></svg>
<div class="vsep" style="left:1473px;top:29px;height:19px;background:#9a9a9a"></div>
<svg style="left:1480px;top:27px" width="22" height="22" viewBox="-11.0 -11.0 22 22"><path d="M-7.5 -7H5L8 -5V7.5H-7.5Z" fill="#fff" stroke="#222" stroke-width="1"/><text x="0" y="-0.5" font-size="6" font-weight="bold" font-family="Liberation Sans,sans-serif" text-anchor="middle" fill="#222">DXF</text><text x="0" y="5.5" font-size="6" font-weight="bold" font-family="Liberation Sans,sans-serif" text-anchor="middle" fill="#222">DWG</text></svg>
<svg style="left:1506px;top:27px" width="22" height="22" viewBox="-11.0 -11.0 22 22"><path d="M2 -8V8M2 -6H8M2 -3.5H8M2 -1H8M2 1.5H8M2 4H8M2 6.5H8" stroke="#222" stroke-width="1.3"/><text x="-3" y="-2.5" font-size="6" font-weight="bold" font-family="Liberation Sans,sans-serif" text-anchor="middle" fill="#9a1010">DXF</text><text x="-3" y="8" font-size="6" font-weight="bold" font-family="Liberation Sans,sans-serif" text-anchor="middle" fill="#9a1010">DWG</text><path d="M-7 0.5H1M-2 -2L1 .5L-2 3" fill="none" stroke="#e02020" stroke-width="1.2"/></svg>
<svg style="left:1532px;top:27px" width="22" height="22" viewBox="-11.0 -11.0 22 22"><path d="M-6 8V-1A6 6 0 0 1 6 -1V8H2.2V-1A2.2 2.2 0 0 0 -2.2 -1V8Z" fill="#e81010" stroke="#500" stroke-width="0.8"/><rect x="-6" y="5" width="3.8" height="3" fill="#222"/><rect x="2.2" y="5" width="3.8" height="3" fill="#222"/></svg>
<div class="vsep" style="left:1561px;top:29px;height:19px;background:#9a9a9a"></div>
<svg style="left:1566px;top:27px" width="22" height="22" viewBox="-11.0 -11.0 22 22"><rect x="-5.5" y="-5.5" width="11" height="11" fill="#fff" stroke="#222" stroke-width="2"/></svg>
<svg style="left:1593px;top:27px" width="22" height="22" viewBox="-11.0 -11.0 22 22"><path d="M-7.5 -3H7.5M-7.5 3H7.5M-3 -7.5V7.5M3 -7.5V7.5" stroke="#444" stroke-width="1.1"/></svg>
<svg style="left:1619px;top:27px" width="22" height="22" viewBox="-11.0 -11.0 22 22"><rect x="-3.5" y="-3.5" width="7" height="7" fill="none" stroke="#444" stroke-width="1"/><rect x="-.8" y="-.8" width="1.6" height="1.6" fill="#444"/><path d="M-7 -7H7M-7 7H7" stroke="#444" stroke-width="1" stroke-dasharray="1.2 3.4"/><path d="M-7 -7V7M7 -7V7" stroke="#444" stroke-width="1" stroke-dasharray="1.2 3.4"/></svg>
<svg style="left:1645px;top:27px" width="22" height="22" viewBox="-11.0 -11.0 22 22"><rect x="-8" y="-4.5" width="16" height="9" rx="1" fill="#333"/><path d="M-6.5 -2.6H6.5M-6.5 -0.2H6.5" stroke="#fff" stroke-width="1.2" stroke-dasharray="1.3 0.8"/><path d="M-4.5 2.4H4.5" stroke="#fff" stroke-width="1.2"/></svg>
<svg style="left:1671px;top:27px" width="22" height="22" viewBox="-11.0 -11.0 22 22"><rect x="-7.5" y="-6.5" width="15" height="8" fill="#fff" stroke="#333" stroke-width="1"/><text x="0" y="0" font-size="6.5" font-weight="bold" font-family="Liberation Serif,serif" text-anchor="middle" fill="#222">1.00</text><path d="M-7.5 5.5H7.5M-7.5 3.5V7.5M7.5 3.5V7.5" stroke="#333" stroke-width="1.1"/></svg>
<svg style="left:1697px;top:27px" width="22" height="22" viewBox="-11.0 -11.0 22 22"><path d="M-3.5 -8V6M-7 6H7" stroke="#333" stroke-width="1.2"/><path d="M-3.5 -2A8 8 0 0 1 4.5 6" fill="none" stroke="#333" stroke-width="1"/><circle cx="-0.5" cy="3" r="0.8" fill="#333"/></svg>
<svg style="left:1723px;top:27px" width="22" height="22" viewBox="-11.0 -11.0 22 22"><circle cx="0" cy="1" r="6.5" fill="none" stroke="#555" stroke-width="1.1"/><path d="M0 1H8M0 1L5 -6" stroke="#555" stroke-width="1"/></svg>
<svg style="left:1749px;top:27px" width="22" height="22" viewBox="-11.0 -11.0 22 22"><rect x="-7" y="-3.5" width="13" height="11" fill="none" stroke="#222" stroke-width="1.2" stroke-dasharray="1.2 1.2"/><rect x="-8" y="-8" width="2.5" height="2.5" fill="none" stroke="#222" stroke-width=".8"/><rect x="3" y="-8" width="2.5" height="2.5" fill="none" stroke="#222" stroke-width=".8"/><path d="M-5 -6.8H3" stroke="#222" stroke-width="1"/><rect x="-4.5" y="-1" width="2.5" height="2.5" fill="none" stroke="#e0601a" stroke-width="1"/><rect x="1.5" y="3" width="2.5" height="2.5" fill="none" stroke="#e0601a" stroke-width="1"/><path d="M-2 0.2H2.7V3" fill="none" stroke="#e0601a" stroke-width="1"/></svg>
<svg style="left:1775px;top:27px" width="22" height="22" viewBox="-11.0 -11.0 22 22"><path d="M-6.5 -5.5H6.5V3.5H-2L-6.5 7.5V3.5Z" fill="#fff" stroke="#333" stroke-width="1.2" stroke-linejoin="miter"/></svg>
<svg style="left:1801px;top:27px" width="22" height="22" viewBox="-11.0 -11.0 22 22"><path d="M-6.5 -6.5L6 6.5" stroke="#222" stroke-width="2"/><path d="M6.5 -6.5L-1 1" stroke="#222" stroke-width="2.4"/><path d="M-1 1L-6.5 7" stroke="#222" stroke-width="1.4"/><circle cx="-6" cy="-6" r="2.2" fill="none" stroke="#222" stroke-width="1.4"/><circle cx="6.3" cy="6.8" r="1" fill="#a33"/></svg>
<div class="vsep" style="left:1829px;top:29px;height:19px;background:#9a9a9a"></div>
<svg style="left:1833px;top:27px" width="24" height="22" viewBox="-12.0 -11.0 24 22"><rect x="-7.5" y="-7.5" width="4.5" height="15" fill="#fff" stroke="#111" stroke-width="1.4"/><rect x="-1" y="-7.5" width="8" height="8.5" fill="#fff" stroke="#111" stroke-width="1.4"/><rect x="-1" y="3" width="8" height="4.5" fill="#fff" stroke="#111" stroke-width="1.4"/><path d="M9 0h2.4l-1.2 1.5z" fill="#555"/></svg>
<div class="vsep" style="left:1864px;top:29px;height:19px;background:#9a9a9a"></div>
<svg style="left:1867px;top:27px" width="26" height="22" viewBox="-13.0 -11.0 26 22"><circle cx="0" cy="0" r="8" fill="#1f5fe0"/><circle cx="-1.5" cy="-2" r="5.5" fill="#4a8cf0"/><path d="M-5 -4C-3 -7 1 -7 2 -5C1 -3 -1 -3 -2 0C-4 0 -6 -2 -5 -4Z" fill="#d8ecff"/><path d="M1 1C4 0 6 2 5 5C3 7 1 5 1 1Z" fill="#0b2fa0"/><path d="M9.5 0h2.4l-1.2 1.5z" fill="#555"/></svg>
<svg style="left:1893px;top:27px" width="26" height="22" viewBox="-13.0 -11.0 26 22"><path d="M-8 1L2 -7.5L8.5 -3L-1 5.5Z" fill="#7a1f9a" stroke="#3a0a50" stroke-width="0.8"/><path d="M-8 1V4.5L-1 9L8.5 0.5V-3L-1 5.5Z" fill="#e8e0c8" stroke="#3a0a50" stroke-width="0.8"/><text x="0.5" y="1.5" font-size="7" font-weight="bold" font-family="Liberation Sans,sans-serif" text-anchor="middle" fill="#ffd820">?</text><path d="M10 0h2.2l-1.1 1.5z" fill="#555"/></svg>
<svg style="left:1795px;top:12px" width="10" height="2"><path d="M0 1H10" stroke="#fff" stroke-width="1.2"/></svg>
<svg style="left:1843px;top:8px" width="11" height="11"><rect x="0.5" y="2.5" width="7.5" height="7.5" fill="none" stroke="#fff" stroke-width="1"/><path d="M2.5 2.5V0.5H10.2V8H8" fill="none" stroke="#fff" stroke-width="1"/></svg>
<svg style="left:1891px;top:8px" width="10" height="10"><path d="M0 0L10 10M10 0L0 10" stroke="#fff" stroke-width="1.3"/></svg>
<svg style="left:1605px;top:4px" width="18" height="18" viewBox="0 0 18 18"><circle cx="8" cy="8" r="7.5" fill="#e8eef5"/><circle cx="8" cy="5.8" r="2.9" fill="#b9c7d8"/><path d="M2.5 12.5C3.5 9 12.5 9 13.5 12.5C12 15 4 15 2.5 12.5Z" fill="#b9c7d8"/><circle cx="13" cy="13.3" r="4" fill="#3fa64a" stroke="#e8f5e8" stroke-width="0.6"/><path d="M11 13.3L12.5 14.9L15.1 11.9" fill="none" stroke="#fff" stroke-width="1.1"/></svg>
<svg style="left:1656px;top:4px" width="18" height="18" viewBox="0 0 18 18"><path d="M8 0.5L15 4V11.5L8 15L1 11.5V4Z" fill="#f2f4f7"/><path d="M1 4L8 7.5L15 4M8 7.5V15" fill="none" stroke="#c0c8d2" stroke-width="0.9"/><path d="M1 4L8 7.5V15L1 11.5Z" fill="#d9dee6"/><circle cx="13" cy="13.3" r="4" fill="#3fa64a" stroke="#e8f5e8" stroke-width="0.6"/><path d="M11 13.3L12.5 14.9L15.1 11.9" fill="none" stroke="#fff" stroke-width="1.1"/></svg>
<!-- quick access -->
<svg style="left:3px;top:4px" width="40" height="40" viewBox="0 0 40 40"><defs><linearGradient id="lg" x1="0" y1="0" x2="0" y2="1"><stop offset="0" stop-color="#4cb083"/><stop offset="1" stop-color="#0c9b5b"/></linearGradient></defs><rect width="40" height="40" rx="2.5" fill="url(#lg)"/>
<path d="M15.3 5.5L6.5 13.5M15.3 5.5L32 13.5" stroke="#3a3a20" stroke-width="0.6"/>
<path d="M6.5 12.5H32" stroke="#c9a21a" stroke-width="2.6" stroke-dasharray="1.4 0.8"/><path d="M6.5 11.2H32M6.5 13.8H32" stroke="#6e5a10" stroke-width="0.6"/>
<path d="M15.3 5.5V31" stroke="#c9a21a" stroke-width="3" stroke-dasharray="1.4 0.8"/><path d="M13.8 6V31M16.8 6V31" stroke="#6e5a10" stroke-width="0.6"/>
<rect x="6.5" y="14" width="3" height="2" fill="#333"/><path d="M31 14V17.5" stroke="#333" stroke-width="0.6"/><rect x="29.8" y="17.5" width="2.6" height="2.4" fill="#333"/><circle cx="15.3" cy="5.3" r="0.9" fill="#e0701a"/><circle cx="31.3" cy="12.3" r="0.9" fill="#e0701a"/>
<path d="M10.5 31.5L14 29.5H17V31.5Z" fill="#333"/>
<path d="M14 31.5C15.5 33.8 22 35.5 27 34C30.5 33 33.5 31.5 33 29.8C32.5 28.7 31.5 28.7 30.8 28.8C30.8 23.5 27.8 19.8 23.5 19.8C18.5 19.8 15.8 24.5 16.5 30C15.3 30.3 14 30.8 14 31.5Z" fill="#fff" stroke="#777" stroke-width="0.6"/>
<path d="M21 20.3C19.5 23 19.3 27 20.2 31.5M24.5 20C24 23 24.3 28 25.5 31.8M27.3 21.2C28 24 28.5 27 28.6 30.6" fill="none" stroke="#9a9a9a" stroke-width="0.7"/></svg>
<svg style="left:48px;top:2px" width="22" height="22" viewBox="-11.0 -11.0 22 22"><rect x="-7" y="-7" width="14" height="14" fill="#111"/><rect x="-6" y="-6" width="12" height="12" fill="#8a8a0a"/><rect x="-4.5" y="-6" width="9" height="6" fill="#fff"/><rect x="-4.5" y="2" width="8.5" height="4.5" fill="#111"/><rect x="1.3" y="3" width="1.8" height="3" fill="#fff"/><rect x="5" y="-6" width="1" height="1" fill="#fff"/></svg>
<svg style="left:74px;top:2px" width="22" height="22" viewBox="-11.0 -11.0 22 22"><path d="M-2.5 -4.5H2C8 -4.5 8 4 3.5 6.5" fill="none" stroke="#a9a9a9" stroke-width="2.1"/><path d="M-8 -4.5L-2 -9.3V0.3Z" fill="#a9a9a9"/></svg>
<svg style="left:99px;top:2px" width="22" height="22" viewBox="-11.0 -11.0 22 22"><path d="M2.5 -4.5H-2C-8 -4.5 -8 4 -3.5 6.5" fill="none" stroke="#a9a9a9" stroke-width="2.1"/><path d="M8 -4.5L2 -9.3V0.3Z" fill="#a9a9a9"/></svg>
<svg style="left:125px;top:2px" width="22" height="22" viewBox="-11.0 -11.0 22 22"><circle cx="-2.2" cy="-2.8" r="4.8" fill="none" stroke="#333" stroke-width="1.7"/><path d="M1.2 0.8L7.6 7.2" stroke="#333" stroke-width="2.1"/></svg>
<svg style="left:151px;top:2px" width="22" height="22" viewBox="-11.0 -11.0 22 22"><path d="M-3 -5L3 -9.5L9 -6.5L4 -1Z" fill="#fff" stroke="#333" stroke-width="0.7"/><path d="M-8.5 -1.5L-3 -5.5L9.5 -2V3L2 8.5L-8.5 3.5Z" fill="#e9e9e9" stroke="#111" stroke-width="1"/><path d="M-8.5 1L2 5.5L9.5 0.5" fill="none" stroke="#111" stroke-width="1"/><path d="M-6 -1.2L2 2L7.5 -1.5" fill="none" stroke="#666" stroke-width="0.9"/><rect x="-6.3" y="-3" width="1.6" height="1.1" fill="#d22"/><rect x="-4.3" y="-2.2" width="1.6" height="1.1" fill="#2b2"/></svg>
<svg style="left:177px;top:2px" width="22" height="22" viewBox="-11.0 -11.0 22 22"><path d="M-8 -5L-3.5 -8L8.5 -4.5V3L4 6.5L-8 1.5Z" fill="#fff" stroke="#111" stroke-width="1.1"/><path d="M-8 -5L4 -1V6.5M4 -1L8.5 -4.5" fill="none" stroke="#111" stroke-width="1"/><path d="M0 5V9M2.5 6V9.5M5.5 5V8" stroke="#111" stroke-width="1.1"/><rect x="5" y="-1.5" width="2.6" height="1.2" fill="#d22"/><path d="M4.5 1.5L8.3 -1.5V3L4.5 6Z" fill="#888"/></svg>
<svg style="left:201px;top:2px" width="24" height="22" viewBox="-12.0 -11.0 24 22"><rect x="-8" y="-5.5" width="11" height="14" fill="#fff" stroke="#111" stroke-width="1.2"/><path d="M-5.5 -2.5H0.5M-5.5 0H0.5M-5.5 2.5H0.5M-5.5 5H0.5" stroke="#bbb" stroke-width="1.2"/><path d="M-1 -1L5 -7" stroke="#e81020" stroke-width="2.4"/><path d="M1.5 -9.5H8V-3Z" fill="#e81020"/><path d="M9 1h2.4l-1.2 1.5z" fill="#777"/></svg>
<div class="vsep" style="left:230px;top:2px;height:22px;background:#a8a8a8"></div>
<svg style="left:236px;top:2px" width="22" height="22" viewBox="-11.0 -11.0 22 22"><path d="M6.5 -4A7.6 7.6 0 1 0 7.6 0.5" fill="none" stroke="#555" stroke-width="1"/><path d="M3.8 -4.6L8.3 -8L8 -2.8Z" fill="#444"/><circle cx="-1.89" cy="-1.59" r="2.20" fill="none" stroke="#29a5dc" stroke-width="1.23"/><circle cx="1.89" cy="-1.59" r="2.20" fill="none" stroke="#db2f2c" stroke-width="1.23"/><circle cx="1.89" cy="2.19" r="2.20" fill="none" stroke="#52ae32" stroke-width="1.23"/><circle cx="-1.89" cy="2.19" r="2.20" fill="none" stroke="#f1a31f" stroke-width="1.23"/><path d="M-1.89 0.61A2.20 2.20 0 0 0 -0.13 -0.27" fill="none" stroke="#29a5dc" stroke-width="1.23"/></svg>
<svg style="left:260px;top:2px" width="22" height="22" viewBox="-11.0 -11.0 22 22"><circle cx="-3.82" cy="-0.82" r="2.70" fill="none" stroke="#29a5dc" stroke-width="1.51"/><circle cx="0.82" cy="-0.82" r="2.70" fill="none" stroke="#db2f2c" stroke-width="1.51"/><circle cx="0.82" cy="3.82" r="2.70" fill="none" stroke="#52ae32" stroke-width="1.51"/><circle cx="-3.82" cy="3.82" r="2.70" fill="none" stroke="#f1a31f" stroke-width="1.51"/><path d="M-3.82 1.88A2.70 2.70 0 0 0 -1.66 0.80" fill="none" stroke="#29a5dc" stroke-width="1.51"/><path d="M1.5 -3C2 -6 4 -7 6.5 -7" fill="none" stroke="#333" stroke-width="1.5"/><path d="M5.5 -10L10 -7L5.5 -4Z" fill="#333"/></svg>
<svg style="left:285px;top:2px" width="22" height="22" viewBox="-11.0 -11.0 22 22"><path d="M-6 -5.5H6" stroke="#111" stroke-width="1.6"/><path d="M-6 -2.5H6L0 4.5Z" fill="#111"/></svg>
<!-- panel icons -->
<svg style="left:248px;top:145px" width="20" height="20" viewBox="-10.0 -10.0 20 20"><path d="M-4.5 -2.5L0 2.5L4.5 -2.5" fill="none" stroke="#111" stroke-width="1.8"/></svg>
<svg style="left:268px;top:145px" width="20" height="20" viewBox="-10.0 -10.0 20 20"><path d="M-4.5 -4.5L4.5 4.5M4.5 -4.5L-4.5 4.5" stroke="#111" stroke-width="1.4"/></svg>
<svg style="left:1880px;top:145px" width="20" height="20" viewBox="-10.0 -10.0 20 20"><path d="M-4.5 -2.5L0 2.5L4.5 -2.5" fill="none" stroke="#111" stroke-width="1.8"/></svg>
<svg style="left:1900px;top:145px" width="20" height="20" viewBox="-10.0 -10.0 20 20"><path d="M-4.5 -4.5L4.5 4.5M4.5 -4.5L-4.5 4.5" stroke="#111" stroke-width="1.4"/></svg>
<svg style="left:1880px;top:587px" width="20" height="20" viewBox="-10.0 -10.0 20 20"><path d="M-4.5 -2.5L0 2.5L4.5 -2.5" fill="none" stroke="#111" stroke-width="1.8"/></svg>
<svg style="left:1900px;top:587px" width="20" height="20" viewBox="-10.0 -10.0 20 20"><path d="M-4.5 -4.5L4.5 4.5M4.5 -4.5L-4.5 4.5" stroke="#111" stroke-width="1.4"/></svg>
<svg style="left:4px;top:189px" width="20" height="20" viewBox="-10.0 -10.0 20 20"><path d="M-4 -2.5L0 2L4 -2.5" fill="none" stroke="#333" stroke-width="1.7"/></svg>
<svg style="left:1528px;top:609px" width="20" height="20" viewBox="-10.0 -10.0 20 20"><path d="M-4 -2.5L0 2L4 -2.5" fill="none" stroke="#333" stroke-width="1.7"/></svg>
<svg style="left:1547px;top:629px" width="20" height="20" viewBox="-10.0 -10.0 20 20"><path d="M-2 -4L2.5 0L-2 4" fill="none" stroke="#777" stroke-width="1.7"/></svg>
<svg style="left:1547px;top:649px" width="20" height="20" viewBox="-10.0 -10.0 20 20"><path d="M-4 -2.5L0 2L4 -2.5" fill="none" stroke="#333" stroke-width="1.7"/></svg>
<svg style="left:2px;top:167px" width="20" height="20" viewBox="-10.0 -10.0 20 20"><path d="M-4 -2L0 -4L4 -2V3L0 5L-4 3Z" fill="#e6ecf5" stroke="#6f8bb5" stroke-width="0.8"/><path d="M-4 -2L0 0L4 -2M0 0V5" fill="none" stroke="#6f8bb5" stroke-width="0.8"/><path d="M-6 -4.5V-6H-4.5M6 -4.5V-6H4.5M-6 5.5V7H-4.5M6 5.5V7H4.5" fill="none" stroke="#6f8bb5" stroke-width="0.8"/><path d="M3.5 -6.5H8.5M6 -9V-4" stroke="#44659a" stroke-width="1.2"/></svg>
<svg style="left:27px;top:167px" width="20" height="20" viewBox="-10.0 -10.0 20 20"><path d="M-4 -2L0 -4L4 -2V3L0 5L-4 3Z" fill="#e6ecf5" stroke="#6f8bb5" stroke-width="0.8"/><path d="M-4 -2L0 0L4 -2M0 0V5" fill="none" stroke="#6f8bb5" stroke-width="0.8"/><path d="M-6 -4.5V-6H-4.5M6 -4.5V-6H4.5M-6 5.5V7H-4.5M6 5.5V7H4.5" fill="none" stroke="#6f8bb5" stroke-width="0.8"/><path d="M0 2L6 -7L8 -5.5L2 3.5Z" fill="#44659a"/></svg>
<svg style="left:52px;top:167px" width="20" height="20" viewBox="-10.0 -10.0 20 20"><path d="M-4 -2L0 -4L4 -2V3L0 5L-4 3Z" fill="#e6ecf5" stroke="#6f8bb5" stroke-width="0.8"/><path d="M-4 -2L0 0L4 -2M0 0V5" fill="none" stroke="#6f8bb5" stroke-width="0.8"/><path d="M-6 -4.5V-6H-4.5M6 -4.5V-6H4.5M-6 5.5V7H-4.5M6 5.5V7H4.5" fill="none" stroke="#6f8bb5" stroke-width="0.8"/><path d="M2 -8H6L8 -6V-1H2Z" fill="#fff" stroke="#6f8bb5" stroke-width="0.8"/></svg>
<svg style="left:77px;top:167px" width="20" height="20" viewBox="-10.0 -10.0 20 20"><path d="M-4 -2L0 -4L4 -2V3L0 5L-4 3Z" fill="#e6ecf5" stroke="#6f8bb5" stroke-width="0.8"/><path d="M-4 -2L0 0L4 -2M0 0V5" fill="none" stroke="#6f8bb5" stroke-width="0.8"/><path d="M-6 -4.5V-6H-4.5M6 -4.5V-6H4.5M-6 5.5V7H-4.5M6 5.5V7H4.5" fill="none" stroke="#6f8bb5" stroke-width="0.8"/><path d="M3 -8L7.5 -3.5M7.5 -8L3 -3.5" stroke="#e01020" stroke-width="1.2"/></svg>
<svg style="left:102px;top:167px" width="20" height="20" viewBox="-10.0 -10.0 20 20"><path d="M-7 6.5H7M-5 6L0 1.5L5 6Z" fill="#dfe6f2" stroke="#6f8bb5" stroke-width="0.9"/><path d="M-3 -4C-1 -7.5 6 -7.5 8 -4C6 -1 -1 -1 -3 -4Z" fill="#fff" stroke="#6f8bb5" stroke-width="0.9"/><circle cx="2.5" cy="-4" r="1.7" fill="#44659a"/></svg>
<div class="vsep" style="left:128px;top:167px;height:22px;background:#b5b5b5"></div>
<svg style="left:135px;top:167px" width="20" height="20" viewBox="-10.0 -10.0 20 20"><rect x="-6.5" y="-3.5" width="13" height="9" rx="1" fill="#eef2f8" stroke="#6f8bb5" stroke-width="0.9"/><path d="M-3 -3.5L-2 -5.5H2L3 -3.5" fill="none" stroke="#6f8bb5" stroke-width="0.9"/><circle cx="0" cy="1" r="3" fill="none" stroke="#6f8bb5" stroke-width="0.9"/><circle cx="0" cy="1" r="1.3" fill="none" stroke="#6f8bb5" stroke-width="0.7"/></svg>
<svg style="left:160px;top:167px" width="20" height="20" viewBox="-10.0 -10.0 20 20"><rect x="-6.5" y="-3.5" width="13" height="9" rx="1" fill="#eef2f8" stroke="#6f8bb5" stroke-width="0.9"/><path d="M-3 -3.5L-2 -5.5H2L3 -3.5" fill="none" stroke="#6f8bb5" stroke-width="0.9"/><circle cx="0" cy="1" r="3" fill="none" stroke="#6f8bb5" stroke-width="0.9"/><circle cx="0" cy="1" r="1.3" fill="none" stroke="#6f8bb5" stroke-width="0.7"/><path d="M-7.5 7.5L-3.5 3.5" stroke="#44659a" stroke-width="1.3"/><path d="M-4.5 2L-1.5 2.2L-2.5 5.2Z" fill="#44659a"/></svg>
<div class="vsep" style="left:186px;top:167px;height:22px;background:#b5b5b5"></div>
<svg style="left:193px;top:167px" width="20" height="20" viewBox="-10.0 -10.0 20 20"><path d="M-6.5 -6L-0.5 -2.5V7L-6.5 3.5Z" fill="#aebdd6" stroke="#6f8bb5" stroke-width="0.8"/><path d="M-0.5 -2.5L4 -4.5C6.5 -4.5 7 -3 7 -1V2.5L-0.5 7Z" fill="#eef2f8" stroke="#6f8bb5" stroke-width="0.8"/></svg>
<svg style="left:217px;top:167px" width="20" height="20" viewBox="-10.0 -10.0 20 20"><path d="M-6.5 -6L-0.5 -2.5V7L-6.5 3.5Z" fill="#aebdd6" stroke="#6f8bb5" stroke-width="0.8"/><path d="M-0.5 -2.5L4 -4.5C6.5 -4.5 7 -3 7 -1V2.5L-0.5 7Z" fill="#eef2f8" stroke="#6f8bb5" stroke-width="0.8"/><path d="M-8 8L-4 4" stroke="#44659a" stroke-width="1.3"/><path d="M-5 2.5L-2 2.7L-3 5.7Z" fill="#44659a"/></svg>
<svg style="left:1267px;top:171px" width="20" height="20" viewBox="-10.0 -10.0 20 20"><path d="M0 -7V1M0 1L-6.5 6.5M0 1L7 5" fill="none" stroke="#3f7f94" stroke-width="1.4"/></svg>
<svg style="left:1291px;top:171px" width="20" height="20" viewBox="-10.0 -10.0 20 20"><path d="M-6.5 -3H3.5V7H-6.5Z" fill="#a8d8ea" stroke="#111" stroke-width="1.4"/><path d="M-6.5 -3L-3 -6.5H7L3.5 -3M7 -6.5V3.5L3.5 7" fill="#c4e6f2" stroke="#111" stroke-width="1.4" stroke-linejoin="round"/></svg>
<svg style="left:1315px;top:171px" width="20" height="20" viewBox="-10.0 -10.0 20 20"><ellipse cx="0" cy="1" rx="7.5" ry="3.6" fill="none" stroke="#222" stroke-width="1.1"/><circle cx="-0.5" cy="-2" r="3.4" fill="#111"/><path d="M2 6.5l3.4-2 .2 3z" fill="#222"/><path d="M5 2.5A3 3 0 0 1 3 6" fill="none" stroke="#222" stroke-width="1.1"/></svg>
<svg style="left:1339px;top:171px" width="20" height="20" viewBox="-10.0 -10.0 20 20"><ellipse cx="0" cy="2.5" rx="7.5" ry="3.2" fill="none" stroke="#222" stroke-width="1.2"/><path d="M0 -5V6" stroke="#222" stroke-width="1.3"/><circle cx="0" cy="-5.5" r="1.9" fill="#fff" stroke="#222" stroke-width="1.1"/><path d="M2 6.8l3.4-1.6 -.3 3z" fill="#222"/></svg>
<div class="vsep" style="left:1363px;top:169px;height:24px;background:#b5b5b5"></div>
<svg style="left:1369px;top:171px" width="20" height="20" viewBox="-10.0 -10.0 20 20"><rect x="-5.5" y="-6" width="6" height="12" fill="#a8d8ea" stroke="#111" stroke-width="1.2"/><rect x="0.5" y="-6" width="5" height="12" fill="#f5b8b8" stroke="#e81010" stroke-width="1.2"/><path d="M0.5 -7.5V7.5" stroke="#111" stroke-width="1" stroke-dasharray="1.5 1"/></svg>
<svg style="left:1393px;top:171px" width="20" height="20" viewBox="-10.0 -10.0 20 20"><path d="M-6 -6H6L-6 6Z" fill="#5fe870"/><path d="M6 -6V6H-6Z" fill="#a8d8ea"/><rect x="-6" y="-6" width="12" height="12" fill="none" stroke="#111" stroke-width="1.1"/><path d="M-7 7L7 -7" stroke="#111" stroke-width="1.1"/></svg>
<svg style="left:1417px;top:171px" width="20" height="20" viewBox="-10.0 -10.0 20 20"><rect x="-6" y="-5.5" width="12" height="5.5" fill="#c8c0f0"/><rect x="-6" y="0" width="12" height="5.5" fill="#a8d8ea"/><rect x="-6" y="-5.5" width="12" height="11" fill="none" stroke="#2b3fa0" stroke-width="1.1"/><path d="M-7 0H7" stroke="#111" stroke-width="1.1" stroke-dasharray="1.6 1"/></svg>
<svg style="left:1441px;top:171px" width="20" height="20" viewBox="-10.0 -10.0 20 20"><path d="M-7 -3.5L0 -7.5L7 -3.5V4L0 8L-7 4Z" fill="#8cc8e6" stroke="#345" stroke-width="0.9"/><path d="M-7 -3.5L0 0.5L0 3L-7 -1Z" fill="#b8a8e0"/><path d="M7 -3.5L0 0.5L0 3L7 -1Z" fill="#9a90d0"/><path d="M-7 -3.5L0 -7.5L7 -3.5L0 0.5Z" fill="#f0a0a8" stroke="#345" stroke-width="0.7"/><path d="M0 -7.5L7 -3.5L3.5 -1.5L-3.5 -5.5Z" fill="#7ed080"/><path d="M-7 -1L0 3L7 -1M0 0.5V8" fill="none" stroke="#345" stroke-width="0.7"/></svg>
<svg style="left:1465px;top:171px" width="20" height="20" viewBox="-10.0 -10.0 20 20"><path d="M-8 0C-4 -5.5 4 -5.5 8 0C4 5.5 -4 5.5 -8 0Z" fill="#111" stroke="#222" stroke-width="1"/><circle cx="0" cy="0" r="2.6" fill="none" stroke="#888" stroke-width="0.9"/><path d="M-6 7L6.5 -7" stroke="#222" stroke-width="1.2"/></svg>
<div class="vsep" style="left:1489px;top:169px;height:24px;background:#b5b5b5"></div>
<svg style="left:1495px;top:171px" width="20" height="20" viewBox="-10.0 -10.0 20 20"><text x="-2" y="-1.5" font-size="8.5" font-weight="bold" font-family="Liberation Sans,sans-serif" text-anchor="middle" fill="#222">3D</text><circle cx="1.5" cy="3.5" r="3.6" fill="none" stroke="#555" stroke-width="1.6" stroke-dasharray="1.6 1.2"/><circle cx="1.5" cy="3.5" r="1.2" fill="none" stroke="#666" stroke-width="0.7"/></svg>
<svg style="left:1713px;top:582px" width="16" height="3"><path d="M0 1.5H16" stroke="#b0b0b0" stroke-width="2" stroke-dasharray="2 2"/></svg>
<svg style="left:1519px;top:573px" width="3" height="14"><path d="M1.5 0V14" stroke="#b0b0b0" stroke-width="2" stroke-dasharray="2 2"/></svg>
<svg style="left:1851px;top:609px" width="20" height="20" viewBox="-10.0 -10.0 20 20"><path d="M-7.5 0C-4 -5 4 -5 7.5 0C4 5 -4 5 -7.5 0Z" fill="#fff" stroke="#4e6fa8" stroke-width="1"/><circle cx="0" cy="0" r="3" fill="none" stroke="#4e6fa8" stroke-width="1"/><circle cx="0" cy="0" r="1.3" fill="#4e6fa8"/></svg>
<svg style="left:1879px;top:609px" width="20" height="20" viewBox="-10.0 -10.0 20 20"><path d="M-3.2 -0.5V-3.6A3.3 3.3 0 0 1 3.4 -3.6" fill="none" stroke="#9fb0cc" stroke-width="1.3"/><rect x="-5.8" y="-0.7" width="11.6" height="7.6" rx="1" fill="#8e9db6" stroke="#6c7f9f" stroke-width="0.9"/><rect x="-0.7" y="1.6" width="1.4" height="2.6" fill="#e8edf6"/></svg>
<svg style="left:1851px;top:629px" width="20" height="20" viewBox="-10.0 -10.0 20 20"><path d="M-7.5 0C-4 -5 4 -5 7.5 0C4 5 -4 5 -7.5 0Z" fill="#fff" stroke="#b0b0b0" stroke-width="1"/><circle cx="0" cy="0" r="3" fill="none" stroke="#b0b0b0" stroke-width="1"/><circle cx="0" cy="0" r="1.3" fill="#b0b0b0"/><path d="M-6.5 -6.5L6.5 6.5" stroke="#9a9a9a" stroke-width="1.3"/></svg>
<svg style="left:1879px;top:629px" width="20" height="20" viewBox="-10.0 -10.0 20 20"><path d="M-3.2 -0.5V-3.6A3.3 3.3 0 0 1 3.4 -3.6" fill="none" stroke="#9fb0cc" stroke-width="1.3"/><rect x="-5.8" y="-0.7" width="11.6" height="7.6" rx="1" fill="#8e9db6" stroke="#6c7f9f" stroke-width="0.9"/><rect x="-0.7" y="1.6" width="1.4" height="2.6" fill="#e8edf6"/></svg>
<svg style="left:1851px;top:649px" width="20" height="20" viewBox="-10.0 -10.0 20 20"><path d="M-7.5 0C-4 -5 4 -5 7.5 0C4 5 -4 5 -7.5 0Z" fill="#fff" stroke="#4e6fa8" stroke-width="1"/><circle cx="0" cy="0" r="3" fill="none" stroke="#4e6fa8" stroke-width="1"/><circle cx="0" cy="0" r="1.3" fill="#4e6fa8"/></svg>
<svg style="left:1879px;top:649px" width="20" height="20" viewBox="-10.0 -10.0 20 20"><path d="M-3.2 -0.5V-3.6A3.3 3.3 0 0 1 3.4 -3.6" fill="none" stroke="#9fb0cc" stroke-width="1.3"/><rect x="-5.8" y="-0.7" width="11.6" height="7.6" rx="1" fill="#8e9db6" stroke="#6c7f9f" stroke-width="0.9"/><rect x="-0.7" y="1.6" width="1.4" height="2.6" fill="#e8edf6"/></svg>
<svg style="left:1851px;top:669px" width="20" height="20" viewBox="-10.0 -10.0 20 20"><path d="M-7.5 0C-4 -5 4 -5 7.5 0C4 5 -4 5 -7.5 0Z" fill="#fff" stroke="#4e6fa8" stroke-width="1"/><circle cx="0" cy="0" r="3" fill="none" stroke="#4e6fa8" stroke-width="1"/><circle cx="0" cy="0" r="1.3" fill="#4e6fa8"/></svg>
<svg style="left:1879px;top:669px" width="20" height="20" viewBox="-10.0 -10.0 20 20"><path d="M-3.2 -0.5V-3.6A3.3 3.3 0 0 1 3.4 -3.6" fill="none" stroke="#9fb0cc" stroke-width="1.3"/><rect x="-5.8" y="-0.7" width="11.6" height="7.6" rx="1" fill="#8e9db6" stroke="#6c7f9f" stroke-width="0.9"/><rect x="-0.7" y="1.6" width="1.4" height="2.6" fill="#e8edf6"/></svg>
<svg style="left:1851px;top:689px" width="20" height="20" viewBox="-10.0 -10.0 20 20"><path d="M-7.5 0C-4 -5 4 -5 7.5 0C4 5 -4 5 -7.5 0Z" fill="#fff" stroke="#4e6fa8" stroke-width="1"/><circle cx="0" cy="0" r="3" fill="none" stroke="#4e6fa8" stroke-width="1"/><circle cx="0" cy="0" r="1.3" fill="#4e6fa8"/></svg>
<svg style="left:1879px;top:689px" width="20" height="20" viewBox="-10.0 -10.0 20 20"><path d="M-3.2 -0.5V-3.6A3.3 3.3 0 0 1 3.4 -3.6" fill="none" stroke="#9fb0cc" stroke-width="1.3"/><rect x="-5.8" y="-0.7" width="11.6" height="7.6" rx="1" fill="#8e9db6" stroke="#6c7f9f" stroke-width="0.9"/><rect x="-0.7" y="1.6" width="1.4" height="2.6" fill="#e8edf6"/></svg>
<svg style="left:5px;top:1013px" width="20" height="20" viewBox="-10.0 -10.0 20 20"><circle cx="0" cy="0" r="7" fill="#1e88d8"/><circle cx="0" cy="-3.4" r="1.2" fill="#fff"/><rect x="-1.1" y="-1.2" width="2.2" height="5.6" fill="#fff"/></svg>
<svg style="left:2px;top:448px" width="6" height="10"><path d="M5 0L0 5L5 10Z" fill="#555"/></svg>
<svg style="left:2px;top:655px" width="6" height="16"><rect x="0.5" y="0.5" width="4" height="4" fill="none" stroke="#4a70b8" stroke-width="1"/><rect x="0.5" y="6" width="4" height="4" fill="none" stroke="#4a70b8" stroke-width="1"/><rect x="0.5" y="11.5" width="4" height="4" fill="none" stroke="#4a70b8" stroke-width="1"/></svg>
<!-- 3D scene -->
<svg style="left:296px;top:195px;overflow:hidden" width="1221" height="818" viewBox="296 195 1221 818"><polygon points="1194.0,772.0 1159.0,914.0 1294.0,990.0 1306.0,981.0 1315.0,891.0 1316.0,825.0" fill="#c3c4be" stroke="#6b6c66" stroke-width="0.9" stroke-linejoin="round" opacity="0.92"/>
<polyline points="1159.0,914.0 1165.0,908.0 1197.0,785.0" fill="none" stroke="#8a8b85" stroke-width="0.7"/>
<polyline points="1165.0,908.0 1297.0,981.0 1306.0,981.0" fill="none" stroke="#8a8b85" stroke-width="0.7"/>
<polyline points="1297.0,981.0 1294.0,990.0" fill="none" stroke="#8a8b85" stroke-width="0.7"/>
<rect x="1189.5" y="787.0" width="17" height="26" rx="8.5" fill="#a3a49e" opacity="0.5" transform="rotate(32 1198.0 800.0)"/>
<rect x="1181.5" y="829.0" width="17" height="26" rx="8.5" fill="#a3a49e" opacity="0.5" transform="rotate(32 1190.0 842.0)"/>
<rect x="1172.5" y="877.0" width="17" height="26" rx="8.5" fill="#a3a49e" opacity="0.5" transform="rotate(32 1181.0 890.0)"/>
<rect x="1235.5" y="804.0" width="17" height="26" rx="8.5" fill="#a3a49e" opacity="0.5" transform="rotate(32 1244.0 817.0)"/>
<rect x="1227.5" y="849.0" width="17" height="26" rx="8.5" fill="#a3a49e" opacity="0.5" transform="rotate(32 1236.0 862.0)"/>
<rect x="1217.5" y="901.0" width="17" height="26" rx="8.5" fill="#a3a49e" opacity="0.5" transform="rotate(32 1226.0 914.0)"/>
<rect x="1275.5" y="867.0" width="17" height="26" rx="8.5" fill="#a3a49e" opacity="0.5" transform="rotate(32 1284.0 880.0)"/>
<rect x="1265.5" y="924.0" width="17" height="26" rx="8.5" fill="#a3a49e" opacity="0.5" transform="rotate(32 1274.0 937.0)"/>
<polygon points="1244.0,797.0 1219.5,929.0 1290.0,871.0 1290.7,819.5" fill="#9d9e98" stroke="#6b6c66" stroke-width="0.8" stroke-linejoin="round" opacity="0.95"/>
<polygon points="1219.5,929.0 1249.6,946.7 1316.4,895.0 1290.0,871.0" fill="#a4a59f" stroke="#6b6c66" stroke-width="0.8" stroke-linejoin="round" opacity="0.95"/>
<polygon points="1290.7,819.5 1290.0,871.0 1331.5,888.7 1354.2,866.0 1354.2,841.0" fill="#9a9b95" stroke="#6b6c66" stroke-width="0.8" stroke-linejoin="round" opacity="0.95"/>
<polyline points="1290.5,832.0 1290.0,868.0" fill="none" stroke="#444" stroke-width="1.1" stroke-dasharray="3 2"/>
<polygon points="1314.0,893.0 1351.7,907.6 1383.5,887.4 1384.0,870.0 1356.0,848.0 1330.0,860.0" fill="#a9aaa4" stroke="#6b6c66" stroke-width="0.6" stroke-linejoin="round"/>
<polyline points="1321.0,891.0 1351.7,907.6 1383.2,887.4" fill="none" stroke="#8a8b85" stroke-width="0.7"/>
<polygon points="912.0,645.0 886.0,700.0 922.0,717.0 950.0,660.0" fill="#bfc0ba" stroke="#6b6c66" stroke-width="0.8" stroke-linejoin="round" opacity="0.95"/>
<polygon points="950.0,660.0 990.0,678.0 981.0,704.0 957.0,711.0 938.0,690.0" fill="#c1c2bc" stroke="#6b6c66" stroke-width="0.7" stroke-linejoin="round" opacity="0.95"/>
<rect x="956.5" y="697.0" width="11" height="16" rx="5.5" fill="#b5b6b0" opacity="0.7" transform="rotate(10 962.0 705.0)"/>
<polygon points="864.0,725.0 903.0,709.0 936.0,709.0 945.0,766.0 926.0,794.0 859.0,759.0" fill="#c3c4be" stroke="#6b6c66" stroke-width="0.8" stroke-linejoin="round" opacity="0.95"/>
<polyline points="865.0,738.0 931.0,773.0 945.0,766.0" fill="none" stroke="#8a8b85" stroke-width="0.7"/>
<polyline points="931.0,773.0 926.0,794.0" fill="none" stroke="#8a8b85" stroke-width="0.7"/>
<rect x="864.5" y="757.5" width="11" height="17" rx="5.5" fill="#b9bab4" opacity="0.8" transform="rotate(5 870.0 766.0)"/>
<rect x="912.5" y="783.5" width="11" height="17" rx="5.5" fill="#b9bab4" opacity="0.8" transform="rotate(5 918.0 792.0)"/>
<polygon points="923.0,655.0 950.0,668.0 924.0,738.0 914.0,746.0 900.0,741.0 897.0,728.0" fill="#a3a49e" opacity="0.9"/>
<polygon points="909.0,652.0 905.0,668.0 922.0,676.0 945.0,668.0" fill="#8f908a" opacity="0.5"/>
<polygon points="690.0,235.0 752.3,220.2 761.8,222.7 761.0,227.0 690.0,264.5" fill="#b7b8b2" stroke="#6b6c66" stroke-width="0.8" stroke-linejoin="round"/>
<polyline points="690.0,243.0 757.0,223.5" fill="none" stroke="#8a8b85" stroke-width="0.7"/>
<clipPath id="deckclip"><polygon points="761,226 1400,379 1400,900 680,900 680,269"/></clipPath>
<g clip-path="url(#deckclip)">
<polygon points="690.0,209.1 1391.7,382.8 1381.0,485.0 1370.0,635.0 1356.0,854.5 690.0,548.3" fill="#a7a8a2"/>
<polygon points="690.0,209.1 1391.7,382.8 1390.9,390.0 690.0,214.1" fill="#b7b8b2"/>
<polygon points="690.0,243.4 1386.6,431.7 1386.4,432.8 690.0,244.1" fill="#c8c9c3" opacity="0.25"/>
<polygon points="690.0,260.6 1384.0,456.1 1383.9,457.2 690.0,261.4" fill="#c8c9c3" opacity="0.3"/>
<polygon points="690.0,278.6 1381.4,481.5 1381.2,482.8 690.0,279.5" fill="#c8c9c3" opacity="0.4"/>
<polygon points="690.0,298.4 1379.2,509.8 1379.1,511.4 690.0,299.5" fill="#c8c9c3" opacity="0.5"/>
<polygon points="690.0,320.9 1376.8,541.8 1376.7,543.7 690.0,322.2" fill="#c8c9c3" opacity="0.6"/>
<polygon points="690.0,328.5 1376.0,552.7 1375.9,555.1 690.0,330.2" fill="#c4c5bf" opacity="0.15"/>
<polygon points="690.0,328.2 1376.1,552.3 1375.2,564.2 690.0,336.6" fill="#a0a19b" opacity="0.2"/>
<polygon points="690.0,336.6 1375.2,564.2 1374.3,576.6 690.0,345.4" fill="#afb0aa" opacity="0.2"/>
<polygon points="690.0,345.2 1374.3,576.3 1374.1,578.6 690.0,346.8" fill="#c8c9c3" opacity="0.7"/>
<polygon points="690.0,353.5 1373.4,588.2 1373.2,590.8 690.0,355.4" fill="#c4c5bf" opacity="0.27"/>
<polygon points="690.0,353.4 1373.5,587.9 1372.5,601.1 690.0,362.7" fill="#a0a19b" opacity="0.36"/>
<polygon points="690.0,362.7 1372.5,601.1 1371.5,614.7 690.0,372.3" fill="#afb0aa" opacity="0.36"/>
<polygon points="690.0,372.1 1371.5,614.5 1371.3,617.3 690.0,374.1" fill="#c8c9c3" opacity="0.8"/>
<polygon points="690.0,381.8 1370.5,628.1 1370.3,630.9 690.0,383.8" fill="#c4c5bf" opacity="0.38"/>
<polygon points="690.0,381.6 1370.5,627.9 1369.6,641.3 690.0,391.1" fill="#a0a19b" opacity="0.52"/>
<polygon points="690.0,391.1 1369.6,641.3 1368.8,654.0 690.0,400.1" fill="#afb0aa" opacity="0.52"/>
<polygon points="690.0,399.9 1368.8,653.7 1368.5,657.9 690.0,402.8" fill="#c8c9c3" opacity="0.9"/>
<polygon points="690.0,411.3 1367.8,670.0 1367.6,673.0 690.0,413.5" fill="#c4c5bf" opacity="0.5"/>
<polygon points="690.0,411.4 1367.8,670.0 1366.7,686.4 690.0,422.9" fill="#a0a19b" opacity="0.68"/>
<polygon points="690.0,422.9 1366.7,686.4 1365.8,700.0 690.0,432.5" fill="#afb0aa" opacity="0.68"/>
<polygon points="690.0,432.4 1365.9,699.7 1365.4,706.8 690.0,437.4" fill="#c8c9c3" opacity="1"/>
<polygon points="690.0,446.8 1364.6,720.1 1364.4,723.3 690.0,449.1" fill="#c4c5bf" opacity="0.62"/>
<polygon points="690.0,446.9 1364.6,720.2 1363.5,736.5 690.0,458.4" fill="#a0a19b" opacity="0.84"/>
<polygon points="690.0,458.4 1363.5,736.5 1362.9,745.5 690.0,464.9" fill="#afb0aa" opacity="0.84"/>
<polygon points="690.0,464.7 1363.0,745.3 1362.2,756.8 690.0,472.9" fill="#c8c9c3" opacity="1"/>
<polygon points="690.0,483.7 1361.2,772.0 1361.0,775.4 690.0,486.1" fill="#c4c5bf" opacity="0.73"/>
<polygon points="690.0,484.0 1361.2,772.4 1360.0,792.1 690.0,498.0" fill="#a0a19b" opacity="1.0"/>
<polygon points="690.0,498.0 1360.0,792.1 1359.4,800.5 690.0,504.0" fill="#afb0aa" opacity="1.0"/>
<polygon points="690.0,503.8 1359.4,800.3 1358.4,816.9 690.0,515.6" fill="#c8c9c3" opacity="1"/>
<polygon points="690.0,526.0 1357.4,831.4 1357.2,835.0 690.0,528.6" fill="#c4c5bf" opacity="0.85"/>
<polygon points="690.0,542.1 1356.3,851.0 1356.0,854.5 690.0,548.3" fill="#b1b2ac"/>
<polyline points="690.0,542.1 1356.3,851.0" fill="none" stroke="#7c7d77" stroke-width="0.8"/>
<polyline points="690.0,214.8 1390.8,391.0" fill="none" stroke="#4a4b45" stroke-width="1.7" stroke-dasharray="2.4 1.5" opacity="1.0"/>
<polyline points="690.0,217.9 1390.3,395.4" fill="none" stroke="#4a4b45" stroke-width="1.7" stroke-dasharray="2.4 1.5" opacity="1.0"/>
<polyline points="690.0,230.2 1388.5,412.9" fill="none" stroke="#4a4b45" stroke-width="1.6583333333333332" stroke-dasharray="2.35 1.8" opacity="0.97"/>
<polyline points="690.0,233.3 1388.1,417.3" fill="none" stroke="#4a4b45" stroke-width="1.6583333333333332" stroke-dasharray="2.35 1.8" opacity="0.97"/>
<polyline points="690.0,245.2 1386.3,434.3" fill="none" stroke="#4a4b45" stroke-width="1.6166666666666667" stroke-dasharray="2.3 2.1" opacity="0.94"/>
<polyline points="690.0,248.5 1385.8,439.0" fill="none" stroke="#4a4b45" stroke-width="1.6166666666666667" stroke-dasharray="2.3 2.1" opacity="0.94"/>
<polyline points="690.0,262.4 1383.7,458.7" fill="none" stroke="#4a4b45" stroke-width="1.575" stroke-dasharray="2.25 2.4" opacity="0.91"/>
<polyline points="690.0,265.7 1383.3,463.4" fill="none" stroke="#4a4b45" stroke-width="1.575" stroke-dasharray="2.25 2.4" opacity="0.91"/>
<polyline points="690.0,280.6 1381.1,484.4" fill="none" stroke="#4a4b45" stroke-width="1.5333333333333332" stroke-dasharray="2.1999999999999997 2.7" opacity="0.88"/>
<polyline points="690.0,283.8 1380.7,489.0" fill="none" stroke="#4a4b45" stroke-width="1.5333333333333332" stroke-dasharray="2.1999999999999997 2.7" opacity="0.88"/>
<polyline points="690.0,300.6 1379.0,512.9" fill="none" stroke="#4a4b45" stroke-width="1.4916666666666667" stroke-dasharray="2.15 3.0" opacity="0.85"/>
<polyline points="690.0,304.2 1378.6,518.1" fill="none" stroke="#4a4b45" stroke-width="1.4916666666666667" stroke-dasharray="2.15 3.0" opacity="0.85"/>
<polyline points="690.0,323.3 1376.6,545.3" fill="none" stroke="#4a4b45" stroke-width="1.45" stroke-dasharray="2.1 3.3" opacity="0.82"/>
<polyline points="690.0,327.4 1376.2,551.1" fill="none" stroke="#4a4b45" stroke-width="1.45" stroke-dasharray="2.1 3.3" opacity="0.82"/>
<polyline points="690.0,347.9 1374.0,580.2" fill="none" stroke="#4a4b45" stroke-width="1.4083333333333332" stroke-dasharray="2.05 3.6" opacity="0.8"/>
<polyline points="690.0,352.5 1373.5,586.6" fill="none" stroke="#4a4b45" stroke-width="1.4083333333333332" stroke-dasharray="2.05 3.6" opacity="0.8"/>
<polyline points="690.0,375.2 1371.2,618.8" fill="none" stroke="#4a4b45" stroke-width="1.3666666666666667" stroke-dasharray="2.0 3.9" opacity="0.77"/>
<polyline points="690.0,380.7 1370.6,626.6" fill="none" stroke="#4a4b45" stroke-width="1.3666666666666667" stroke-dasharray="2.0 3.9" opacity="0.77"/>
<polyline points="690.0,403.9 1368.4,659.4" fill="none" stroke="#4a4b45" stroke-width="1.325" stroke-dasharray="1.95 4.2" opacity="0.74"/>
<polyline points="690.0,410.2 1367.9,668.4" fill="none" stroke="#4a4b45" stroke-width="1.325" stroke-dasharray="1.95 4.2" opacity="0.74"/>
<polyline points="690.0,438.5 1365.3,708.3" fill="none" stroke="#4a4b45" stroke-width="1.2833333333333332" stroke-dasharray="1.9 4.5" opacity="0.71"/>
<polyline points="690.0,445.7 1364.7,718.6" fill="none" stroke="#4a4b45" stroke-width="1.2833333333333332" stroke-dasharray="1.9 4.5" opacity="0.71"/>
<polyline points="690.0,474.0 1362.1,758.3" fill="none" stroke="#4a4b45" stroke-width="1.2416666666666667" stroke-dasharray="1.85 4.8" opacity="0.68"/>
<polyline points="690.0,482.6 1361.3,770.5" fill="none" stroke="#4a4b45" stroke-width="1.2416666666666667" stroke-dasharray="1.85 4.8" opacity="0.68"/>
<polyline points="690.0,516.7 1358.3,818.4" fill="none" stroke="#4a4b45" stroke-width="1.2" stroke-dasharray="1.7999999999999998 5.1" opacity="0.65"/>
<polyline points="690.0,524.9 1357.5,829.9" fill="none" stroke="#4a4b45" stroke-width="1.2" stroke-dasharray="1.7999999999999998 5.1" opacity="0.65"/>
<polyline points="690.0,209.1 1391.7,382.8" fill="none" stroke="#6b6c66" stroke-width="1.3"/>
<polyline points="690.0,548.3 1356.0,854.5" fill="none" stroke="#6b6c66" stroke-width="1.1"/>
<polygon points="690.0,264.0 761.0,227.0 772.0,245.0 772.0,335.0 690.0,335.0" fill="#85867f" opacity="0.18"/>
<polyline points="761.0,226.5 690.0,263.5" fill="none" stroke="#5f605a" stroke-width="2.2"/>
</g>
<polygon points="925.0,271.5 951.0,278.0 838.0,413.6 790.0,391.0" fill="#8e8f88" opacity="0.33"/>
<polyline points="925.5,271.5 790.0,391.0" fill="none" stroke="#55564f" stroke-width="2.0"/>
<polygon points="1126.0,324.0 1156.0,331.5 983.0,683.6 921.0,654.5" fill="#8e8f88" opacity="0.33"/>
<polyline points="1126.0,324.0 921.0,654.5" fill="none" stroke="#55564f" stroke-width="2.0"/>
<rect x="896.0" y="290.0" width="18" height="110" rx="9.0" fill="#85867f" opacity="0.16" transform="rotate(8 905.0 345.0)"/>
<rect x="863.0" y="330.0" width="18" height="120" rx="9.0" fill="#85867f" opacity="0.16" transform="rotate(8 872.0 390.0)"/>
<rect x="834.0" y="375.0" width="16" height="110" rx="8.0" fill="#85867f" opacity="0.16" transform="rotate(8 842.0 430.0)"/>
<rect x="823.0" y="485.0" width="14" height="70" rx="7.0" fill="#85867f" opacity="0.16" transform="rotate(8 830.0 520.0)"/>
<rect x="862.0" y="445.0" width="12" height="50" rx="6.0" fill="#85867f" opacity="0.16" transform="rotate(8 868.0 470.0)"/>
<rect x="1082.0" y="345.0" width="26" height="170" rx="13.0" fill="#85867f" opacity="0.28" transform="rotate(14 1095.0 430.0)"/>
<rect x="1032.0" y="430.0" width="26" height="180" rx="13.0" fill="#85867f" opacity="0.28" transform="rotate(14 1045.0 520.0)"/>
<rect x="993.0" y="515.0" width="24" height="150" rx="12.0" fill="#85867f" opacity="0.28" transform="rotate(14 1005.0 590.0)"/>
<rect x="947.0" y="580.0" width="26" height="120" rx="13.0" fill="#85867f" opacity="0.28" transform="rotate(14 960.0 640.0)"/>
<polygon points="1389.0,396.0 1352.0,401.0 1269.0,461.5 1208.0,720.0 1192.0,782.0 1354.0,852.0 1370.0,635.0 1381.0,485.0" fill="#7d7e77" opacity="0.3"/>
<polygon points="1386.0,404.0 1308.0,447.0 1261.0,720.0 1242.0,807.0 1354.0,852.0 1370.0,635.0 1381.0,485.0" fill="#7d7e77" opacity="0.2"/>
<polygon points="1386.0,404.0 1339.0,419.0 1295.0,720.0 1275.0,820.0 1354.0,852.0 1370.0,635.0 1381.0,485.0" fill="#7d7e77" opacity="0.16"/>
<polygon points="1387.0,398.0 1368.0,392.0 1346.0,720.0 1335.0,845.0 1354.0,852.0 1370.0,635.0 1381.0,485.0" fill="#7d7e77" opacity="0.18"/>
<polyline points="1368.0,392.0 1346.0,720.0 1337.0,845.0" fill="none" stroke="#6d6e68" stroke-width="0.7" opacity="0.6"/>
<polyline points="1352.0,401.0 1269.0,461.5 1208.0,720.0" fill="none" stroke="#8a8b85" stroke-width="0.6" opacity="0.5"/>
<polygon points="1392.0,379.5 1393.5,378.0 1410.5,382.5 1405.0,482.0 1405.0,487.0 1400.0,635.0 1398.0,640.0 1383.0,880.0 1363.0,864.0 1356.0,854.0 1370.0,635.0 1381.0,485.0" fill="#a6a7a1" stroke="#6b6c66" stroke-width="0.9" stroke-linejoin="round"/>
<polygon points="1396.0,383.0 1410.0,386.0 1405.0,482.0 1385.0,487.0 1390.0,420.0" fill="#b4b5af"/>
<polygon points="1405.0,482.0 1474.0,528.0 1473.0,536.0 1405.0,489.0" fill="#b4b5af" stroke="#6b6c66" stroke-width="0.6" stroke-linejoin="round"/>
<polygon points="1400.0,635.0 1485.0,695.0 1478.0,704.0 1398.0,642.0" fill="#b4b5af" stroke="#6b6c66" stroke-width="0.6" stroke-linejoin="round"/>
<polygon points="1411.0,385.0 1467.0,421.5 1473.0,528.0 1405.0,483.0" fill="#cbccc6" stroke="#6b6c66" stroke-width="0.9" stroke-linejoin="round"/>
<polygon points="1467.0,421.5 1470.0,422.0 1476.0,527.0 1473.0,528.0" fill="#a9aaa4" stroke="#6b6c66" stroke-width="0.6" stroke-linejoin="round"/>
<polygon points="1405.0,488.0 1473.0,535.0 1485.0,695.0 1400.0,636.0" fill="#cbccc6" stroke="#6b6c66" stroke-width="0.9" stroke-linejoin="round"/>
<polygon points="1473.0,535.0 1476.5,533.0 1488.5,692.0 1485.0,695.0" fill="#a9aaa4" stroke="#6b6c66" stroke-width="0.6" stroke-linejoin="round"/>
<polygon points="1398.0,641.0 1477.0,703.0 1503.0,962.0 1494.0,968.0 1383.0,880.0" fill="#cbccc6" stroke="#6b6c66" stroke-width="0.9" stroke-linejoin="round"/>
<polygon points="1477.0,703.0 1481.0,701.0 1507.0,958.0 1503.0,962.0" fill="#a2a39d" stroke="#6b6c66" stroke-width="0.6" stroke-linejoin="round"/>
<polyline points="1383.0,880.0 1392.0,876.0 1500.0,960.0" fill="none" stroke="#8a8b85" stroke-width="0.7"/>
<polygon points="1381.0,485.0 1405.0,487.0 1400.0,636.0 1370.0,635.0" fill="#a1a29c" stroke="#6b6c66" stroke-width="0.7" stroke-linejoin="round"/>
<polygon points="1370.0,635.0 1398.0,640.0 1383.0,880.0 1356.0,854.0" fill="#9b9c96" stroke="#6b6c66" stroke-width="0.7" stroke-linejoin="round"/></svg>
<!-- Hormigon dialog -->
<div class="a" style="left:271px;top:176px;width:443px;height:160px;background:#2e7dd1;border-top:1px solid #1a5fb0"></div>
<div class="a f0" style="left:275px;top:207px;width:435px;height:120px"></div>
<div class="t w c" style="left:344px;top:187px;width:200px">Hormigón</div>
<div class="a" style="left:283px;top:240px;width:418px;height:90px;background:#fff;border:1px solid #bdbdbd"></div>
<div class="a" style="left:284px;top:241px;width:415px;height:22px;background:#f2f2f2"></div>
<div class="vsep" style="left:443px;top:244px;height:16px;background:#d5d5d5"></div>
<div class="vsep" style="left:604px;top:244px;height:16px;background:#d5d5d5"></div>
<div class="vsep" style="left:645px;top:244px;height:16px;background:#d5d5d5"></div>
<div class="vsep" style="left:698px;top:244px;height:16px;background:#d5d5d5"></div>
<div class="t c" style="left:285px;top:246px;width:158px">Referencia</div>
<div class="t c" style="left:443px;top:246px;width:161px">Grupo de comprobaciones</div>
<div class="t c" style="left:604px;top:246px;width:41px">Color</div>
<div class="t c" style="left:645px;top:246px;width:54px">Cumple</div>
<div class="a" style="left:285px;top:264px;width:158px;height:19px;background:#4b9fe1"></div>
<div class="a" style="left:444px;top:264px;width:255px;height:19px;background:#cce8ff"></div>
<div class="t w c" style="left:285px;top:267px;width:158px">Lote</div>
<div class="t" style="left:452px;top:267px">Tableros de puente en ge...</div>
<div class="a" style="left:606px;top:267px;width:35px;height:14px;background:#ff0000"></div>
<!-- Caracteristicas dialog -->
<div class="a" style="left:10px;top:319px;width:811px;height:672px;background:#2e7dd1"></div>
<div class="a" style="left:820px;top:319px;width:1px;height:672px;background:#1a5fb0"></div>
<div class="a" style="left:14px;top:349px;width:802px;height:638px;background:#f0f0f0"></div>
<div class="a" style="left:14px;top:948px;width:802px;height:39px;background:#e6e6e6"></div>
<div class="a" style="left:14px;top:947px;width:802px;height:1px;background:#d4d4d4"></div>
<div class="t w c" style="left:168px;top:329px;width:400px">Características del hormigón del lote</div>
<div class="a" style="left:22px;top:357px;width:786px;height:312px;background:#fff"></div>
<div class="t" style="left:36px;top:373px;letter-spacing:-0.3px">Referencia</div>
<div class="inp" style="left:97px;top:371px;width:655px;height:28px"></div>
<div class="t" style="left:103px;top:375px">Lote 1</div>
<div class="a" style="left:766px;top:371px;width:28px;height:28px;background:#fff;border:1px solid #555"></div>
<div class="a" style="left:772px;top:377px;width:16px;height:16px;background:#00ff00"></div>
<div class="t" style="left:36px;top:420px;letter-spacing:0.15px">Tipo de control</div>
<div class="sel" style="left:123px;top:413px;width:95px;height:25px"><div class="t" style="top:5px;letter-spacing:-0.25px">Estadístico</div><svg class="chev" viewBox="0 0 9 6"><path d="M0.5 0.5L4.5 4.5L8.5 0.5" fill="none" stroke="#444" stroke-width="1"/></svg></div>
<div class="t" style="left:36px;top:462px;letter-spacing:0.2px">Tipo de hormigón</div>
<div class="sel" style="left:138px;top:455px;width:104px;height:25px"><div class="t" style="top:5px">HA-25</div><svg class="chev" viewBox="0 0 9 6"><path d="M0.5 0.5L4.5 4.5L8.5 0.5" fill="none" stroke="#444" stroke-width="1"/></svg></div>
<div class="t" style="left:36px;top:504px">Grupo de comprobaciones aplicables</div>
<div class="sel" style="left:238px;top:497px;width:531px;height:25px"><div class="t" style="top:5px;letter-spacing:-0.11px">Tableros de puente en general y losas in situ de tableros con elementos prefabricados y mixtos</div><svg class="chev" viewBox="0 0 9 6"><path d="M0.5 0.5L4.5 4.5L8.5 0.5" fill="none" stroke="#444" stroke-width="1"/></svg></div>
<div class="t" style="left:36px;top:544px">Cemento</div>
<div class="inp" style="left:91px;top:539px;width:703px;height:23px"></div>
<div class="t" style="left:36px;top:581px">Suministrador</div>
<div class="inp" style="left:116px;top:576px;width:678px;height:23px"></div>
<div class="t" style="left:36px;top:615px">Descripción</div>
<div class="inp" style="left:104px;top:613px;width:664px;height:42px"></div>
<svg style="left:739px;top:331px" width="10" height="10"><rect x="0.5" y="0.5" width="9" height="9" fill="none" stroke="#fff" stroke-width="1"/></svg>
<svg style="left:787px;top:331px" width="10" height="10"><path d="M0 0L10 10M10 0L0 10" stroke="#fff" stroke-width="1.3"/></svg>
<svg style="left:633px;top:189px" width="10" height="10"><rect x="0.5" y="0.5" width="9" height="9" fill="none" stroke="#fff" stroke-width="1"/></svg>
<svg style="left:681px;top:189px" width="10" height="10"><path d="M0 0L10 10M10 0L0 10" stroke="#fff" stroke-width="1.3"/></svg>
<!-- Amasadas group -->
<div class="a" style="left:22px;top:677px;width:457px;height:261px;background:#fff;border:1px solid #d0d0d0"></div>
<div class="a g9" style="left:23px;top:678px;width:455px;height:18px"></div>
<div class="t" style="left:48px;top:680px">Amasadas</div>
<div class="a" style="left:31px;top:728px;width:154px;height:202px;background:#fff;border:1px solid #bdbdbd"></div>
<div class="a" style="left:32px;top:730px;width:152px;height:22px;background:#f2f2f2"></div>
<div class="vsep" style="left:115px;top:733px;height:17px;background:#d5d5d5"></div>
<div class="vsep" style="left:182px;top:733px;height:17px;background:#d5d5d5"></div>
<div class="t" style="left:39px;top:735px">Amasada</div>
<div class="t c" style="left:116px;top:735px;width:66px">Cumple</div>
<div class="a" style="left:33px;top:772px;width:150px;height:1px;background:#ececec"></div>
<div class="a" style="left:33px;top:792px;width:150px;height:1px;background:#ececec"></div>
<div class="a" style="left:33px;top:812px;width:150px;height:1px;background:#ececec"></div>
<div class="a" style="left:115px;top:753px;width:1px;height:80px;background:#ececec"></div>
<div class="t" style="left:39px;top:756px">Amasada 1</div>
<div class="t" style="left:39px;top:776px">Amasada 2</div>
<div class="t" style="left:39px;top:796px">Amasada 3</div>
<div class="a" style="left:33px;top:813px;width:82px;height:19px;background:#4b9fe1"></div>
<div class="a" style="left:116px;top:813px;width:66px;height:19px;background:#cce8ff"></div>
<div class="t w" style="left:39px;top:816px">Amasada 4</div>
<div class="a" style="left:193px;top:728px;width:277px;height:202px;background:#fff;border:1px solid #bdbdbd"></div>
<div class="a" style="left:194px;top:730px;width:275px;height:22px;background:#f2f2f2"></div>
<div class="vsep" style="left:467px;top:733px;height:17px;background:#d5d5d5"></div>
<div class="t" style="left:201px;top:735px">Probetas</div>
<div class="a" style="left:195px;top:753px;width:272px;height:19px;background:#4b9fe1"></div>
<div class="t w" style="left:201px;top:756px">Probeta 4.1</div>
<div class="t" style="left:201px;top:776px">Probeta 4.2</div>
<div class="a" style="left:195px;top:792px;width:272px;height:1px;background:#ececec"></div>
<!-- Parametros group -->
<div class="a" style="left:487px;top:677px;width:321px;height:261px;background:#fff;border:1px solid #d0d0d0"></div>
<div class="a g9" style="left:488px;top:678px;width:319px;height:18px"></div>
<div class="t" style="left:494px;top:680px">Parámetros</div>
<div class="t" style="left:499px;top:712px">Longitud del tablero de puente (m)</div>
<div class="inp" style="left:695px;top:707px;width:63px;height:23px"></div>
<div class="t" style="left:695px;top:711px;width:57px;text-align:right">25.00</div>
<div class="t" style="left:499px;top:749px">Superficie construida (m<span style="font-size:8px;position:relative;top:-4px">2</span>)</div>
<div class="inp" style="left:695px;top:744px;width:63px;height:23px"></div>
<div class="t" style="left:695px;top:748px;width:57px;text-align:right">300.00</div>
<div class="t" style="left:499px;top:786px">Volumen de hormigón (m<span style="font-size:8px;position:relative;top:-4px">3</span>)</div>
<div class="inp" style="left:695px;top:781px;width:63px;height:23px"></div>
<div class="t" style="left:695px;top:785px;width:57px;text-align:right">50.00</div>
<div class="t" style="left:499px;top:823px">Plantas</div>
<div class="a" style="left:543px;top:819px;width:183px;height:22px;background:#f0f0f0;border:1px solid #e6e6e6;border-radius:2px"></div>
<div class="btn" style="left:733px;top:818px;width:24px;height:24px"></div>
<!-- buttons -->
<div class="btn" style="left:21px;top:955px;width:73px;height:25px;border-color:#2e7dd1">Aceptar</div>
<div class="btn" style="left:741px;top:955px;width:68px;height:25px">Cancelar</div>
<!-- dialog icons -->
<svg style="left:285px;top:217px" width="20" height="20" viewBox="-10.0 -10.0 20 20"><path d="M-7 0H7M0 -7V7" stroke="#222" stroke-width="1.6"/></svg>
<svg style="left:308px;top:217px" width="20" height="20" viewBox="-10.0 -10.0 20 20"><path d="M-6.5 7L-5 2.5L3 -6.5C4 -7.5 7 -5 6 -3.5L-2.5 5.5Z" fill="#f4d54a" stroke="#8a7a30" stroke-width="0.9"/><path d="M-6.5 7L-5 2.5L-2.5 5.5Z" fill="#ddd" stroke="#777" stroke-width="0.6"/><path d="M-6.5 7L-5.8 5L-4.7 6.2Z" fill="#333"/></svg>
<svg style="left:331px;top:217px" width="20" height="20" viewBox="-10.0 -10.0 20 20"><rect x="-2.5" y="-7.5" width="10" height="10" fill="#fff" stroke="#b5b5b5" stroke-width="1"/><rect x="-7.5" y="-2.5" width="10" height="10" fill="#c4c4c4" stroke="#a8a8a8" stroke-width="1"/></svg>
<svg style="left:354px;top:217px" width="20" height="20" viewBox="-10.0 -10.0 20 20"><path d="M-6 -6L6 6M6 -6L-6 6" stroke="#d9534f" stroke-width="2.4"/></svg>
<div class="vsep" style="left:378px;top:218px;height:18px;background:#888"></div>
<svg style="left:385px;top:216px" width="20" height="20" viewBox="-10.0 -10.0 20 20"><path d="M-7 3.5L0 -3.5L7 3.5Z" fill="#333"/></svg>
<svg style="left:408px;top:216px" width="20" height="20" viewBox="-10.0 -10.0 20 20"><path d="M-7 -3.5L0 3.5L7 -3.5Z" fill="#333"/></svg>
<svg style="left:662px;top:264px" width="20" height="20" viewBox="-10.0 -10.0 20 20"><circle cx="0" cy="0" r="7" fill="#2ea12a"/><path d="M-4.2 0.2L-1.2 3.4L4.4 -3" fill="none" stroke="#fff" stroke-width="1.8"/></svg>
<svg style="left:27px;top:677px" width="20" height="20" viewBox="-10.0 -10.0 20 20"><circle cx="0" cy="0" r="7.8" fill="#2ea12a"/><path d="M-4.2 0.2L-1.2 3.4L4.4 -3" fill="none" stroke="#fff" stroke-width="1.8"/></svg>
<svg style="left:33px;top:706px" width="20" height="20" viewBox="-10.0 -10.0 20 20"><path d="M-7 0H7M0 -7V7" stroke="#222" stroke-width="1.6"/></svg>
<svg style="left:56px;top:706px" width="20" height="20" viewBox="-10.0 -10.0 20 20"><rect x="-2.5" y="-7.5" width="10" height="10" fill="#fff" stroke="#b5b5b5" stroke-width="1"/><rect x="-7.5" y="-2.5" width="10" height="10" fill="#c4c4c4" stroke="#a8a8a8" stroke-width="1"/></svg>
<svg style="left:79px;top:706px" width="20" height="20" viewBox="-10.0 -10.0 20 20"><path d="M-6 -6L6 6M6 -6L-6 6" stroke="#d9534f" stroke-width="2.4"/></svg>
<svg style="left:195px;top:706px" width="20" height="20" viewBox="-10.0 -10.0 20 20"><path d="M-7 0H7M0 -7V7" stroke="#222" stroke-width="1.6"/></svg>
<svg style="left:218px;top:706px" width="20" height="20" viewBox="-10.0 -10.0 20 20"><rect x="-2.5" y="-7.5" width="10" height="10" fill="#fff" stroke="#b5b5b5" stroke-width="1"/><rect x="-7.5" y="-2.5" width="10" height="10" fill="#c4c4c4" stroke="#a8a8a8" stroke-width="1"/></svg>
<svg style="left:241px;top:706px" width="20" height="20" viewBox="-10.0 -10.0 20 20"><path d="M-6 -6L6 6M6 -6L-6 6" stroke="#d9534f" stroke-width="2.4"/></svg>
<div class="vsep" style="left:265px;top:707px;height:18px;background:#888"></div>
<svg style="left:272px;top:705px" width="20" height="20" viewBox="-10.0 -10.0 20 20"><path d="M-7 3.5L0 -3.5L7 3.5Z" fill="#333"/></svg>
<svg style="left:295px;top:705px" width="20" height="20" viewBox="-10.0 -10.0 20 20"><path d="M-7 -3.5L0 3.5L7 -3.5Z" fill="#333"/></svg>
<svg style="left:139px;top:753px" width="20" height="20" viewBox="-10.0 -10.0 20 20"><circle cx="0" cy="0" r="7.8" fill="#2ea12a"/><path d="M-4.2 0.2L-1.2 3.4L4.4 -3" fill="none" stroke="#fff" stroke-width="1.8"/></svg>
<svg style="left:139px;top:773px" width="20" height="20" viewBox="-10.0 -10.0 20 20"><circle cx="0" cy="0" r="7.8" fill="#2ea12a"/><path d="M-4.2 0.2L-1.2 3.4L4.4 -3" fill="none" stroke="#fff" stroke-width="1.8"/></svg>
<svg style="left:139px;top:793px" width="20" height="20" viewBox="-10.0 -10.0 20 20"><circle cx="0" cy="0" r="7.8" fill="#2ea12a"/><path d="M-4.2 0.2L-1.2 3.4L4.4 -3" fill="none" stroke="#fff" stroke-width="1.8"/></svg>
<svg style="left:139px;top:813px" width="20" height="20" viewBox="-10.0 -10.0 20 20"><circle cx="0" cy="0" r="7.8" fill="#2ea12a"/><path d="M-4.2 0.2L-1.2 3.4L4.4 -3" fill="none" stroke="#fff" stroke-width="1.8"/></svg>
<svg style="left:758px;top:708px" width="20" height="20" viewBox="-10.0 -10.0 20 20"><path d="M-4.5 -1L-1.5 4.5L4.5 -5.5L-1.5 1.5Z" fill="#1a8a1a" stroke="#1a8a1a" stroke-width="0.8" stroke-linejoin="round"/></svg>
<svg style="left:758px;top:782px" width="20" height="20" viewBox="-10.0 -10.0 20 20"><path d="M-4.5 -1L-1.5 4.5L4.5 -5.5L-1.5 1.5Z" fill="#1a8a1a" stroke="#1a8a1a" stroke-width="0.8" stroke-linejoin="round"/></svg>
<svg style="left:778px;top:709px" width="20" height="20" viewBox="-10.0 -10.0 20 20"><path d="M-3.2 -0.5V-3.6A3.3 3.3 0 0 1 3.4 -3.6" fill="none" stroke="#9fb0cc" stroke-width="1.3"/><rect x="-5.8" y="-0.7" width="11.6" height="7.6" rx="1" fill="#8e9db6" stroke="#6c7f9f" stroke-width="0.9"/><rect x="-0.7" y="1.6" width="1.4" height="2.6" fill="#e8edf6"/></svg>
<svg style="left:778px;top:746px" width="20" height="20" viewBox="-10.0 -10.0 20 20"><path d="M-3.2 -0.5V-3.6A3.3 3.3 0 0 1 3.4 -3.6" fill="none" stroke="#9fb0cc" stroke-width="1.3"/><rect x="-5.8" y="-0.7" width="11.6" height="7.6" rx="1" fill="#8e9db6" stroke="#6c7f9f" stroke-width="0.9"/><rect x="-0.7" y="1.6" width="1.4" height="2.6" fill="#e8edf6"/></svg>
<svg style="left:778px;top:783px" width="20" height="20" viewBox="-10.0 -10.0 20 20"><path d="M-3.2 -0.5V-3.6A3.3 3.3 0 0 1 3.4 -3.6" fill="none" stroke="#9fb0cc" stroke-width="1.3"/><rect x="-5.8" y="-0.7" width="11.6" height="7.6" rx="1" fill="#8e9db6" stroke="#6c7f9f" stroke-width="0.9"/><rect x="-0.7" y="1.6" width="1.4" height="2.6" fill="#e8edf6"/></svg>
<svg style="left:778px;top:820px" width="20" height="20" viewBox="-10.0 -10.0 20 20"><path d="M-3.2 -0.5V-3.6A3.3 3.3 0 0 1 3.4 -3.6" fill="none" stroke="#9fb0cc" stroke-width="1.3"/><rect x="-5.8" y="-0.7" width="11.6" height="7.6" rx="1" fill="#8e9db6" stroke="#6c7f9f" stroke-width="0.9"/><rect x="-0.7" y="1.6" width="1.4" height="2.6" fill="#e8edf6"/></svg>
<svg style="left:735px;top:820px" width="20" height="20" viewBox="-10.0 -10.0 20 20"><path d="M-6 -2L0 -5L6 -2L0 1Z" fill="#8a8f9a" stroke="#2b4f8c" stroke-width="1"/><path d="M-6 0.5L0 3.5L6 0.5M-6 3L0 6L6 3" fill="none" stroke="#2b4f8c" stroke-width="1"/></svg>
<svg style="left:747px;top:614px" width="20" height="20" viewBox="-10.0 -10.0 20 20"><path d="M-4 2L0 -2.5L4 2Z" fill="#9a9a9a"/></svg>
<svg style="left:747px;top:635px" width="20" height="20" viewBox="-10.0 -10.0 20 20"><path d="M-4 -2L0 2.5L4 -2Z" fill="#9a9a9a"/></svg>
<svg style="left:774px;top:624px" width="20" height="20" viewBox="-10.0 -10.0 20 20"><rect x="-6.5" y="-7.5" width="13" height="15" rx="1.5" fill="#fdfdfd" stroke="#d6d6d6" stroke-width="1"/><path d="M-4 -5.5H2L4.5 -3V5.5H-4Z" fill="#fff" stroke="#2b4f8c" stroke-width="1"/><path d="M-2 -2H2M-2 0.5H2.5M-2 3H2.5" stroke="#2b4f8c" stroke-width="0.9"/></svg>
<svg style="left:343px;top:418px" width="14" height="21" viewBox="0 0 14 21"><path d="M1 1V16.5L4.7 13L7.6 19.8L10 18.8L7.1 12.2H12.2Z" fill="#fff" stroke="#111" stroke-width="1" stroke-linejoin="round"/></svg>
</body></html>
